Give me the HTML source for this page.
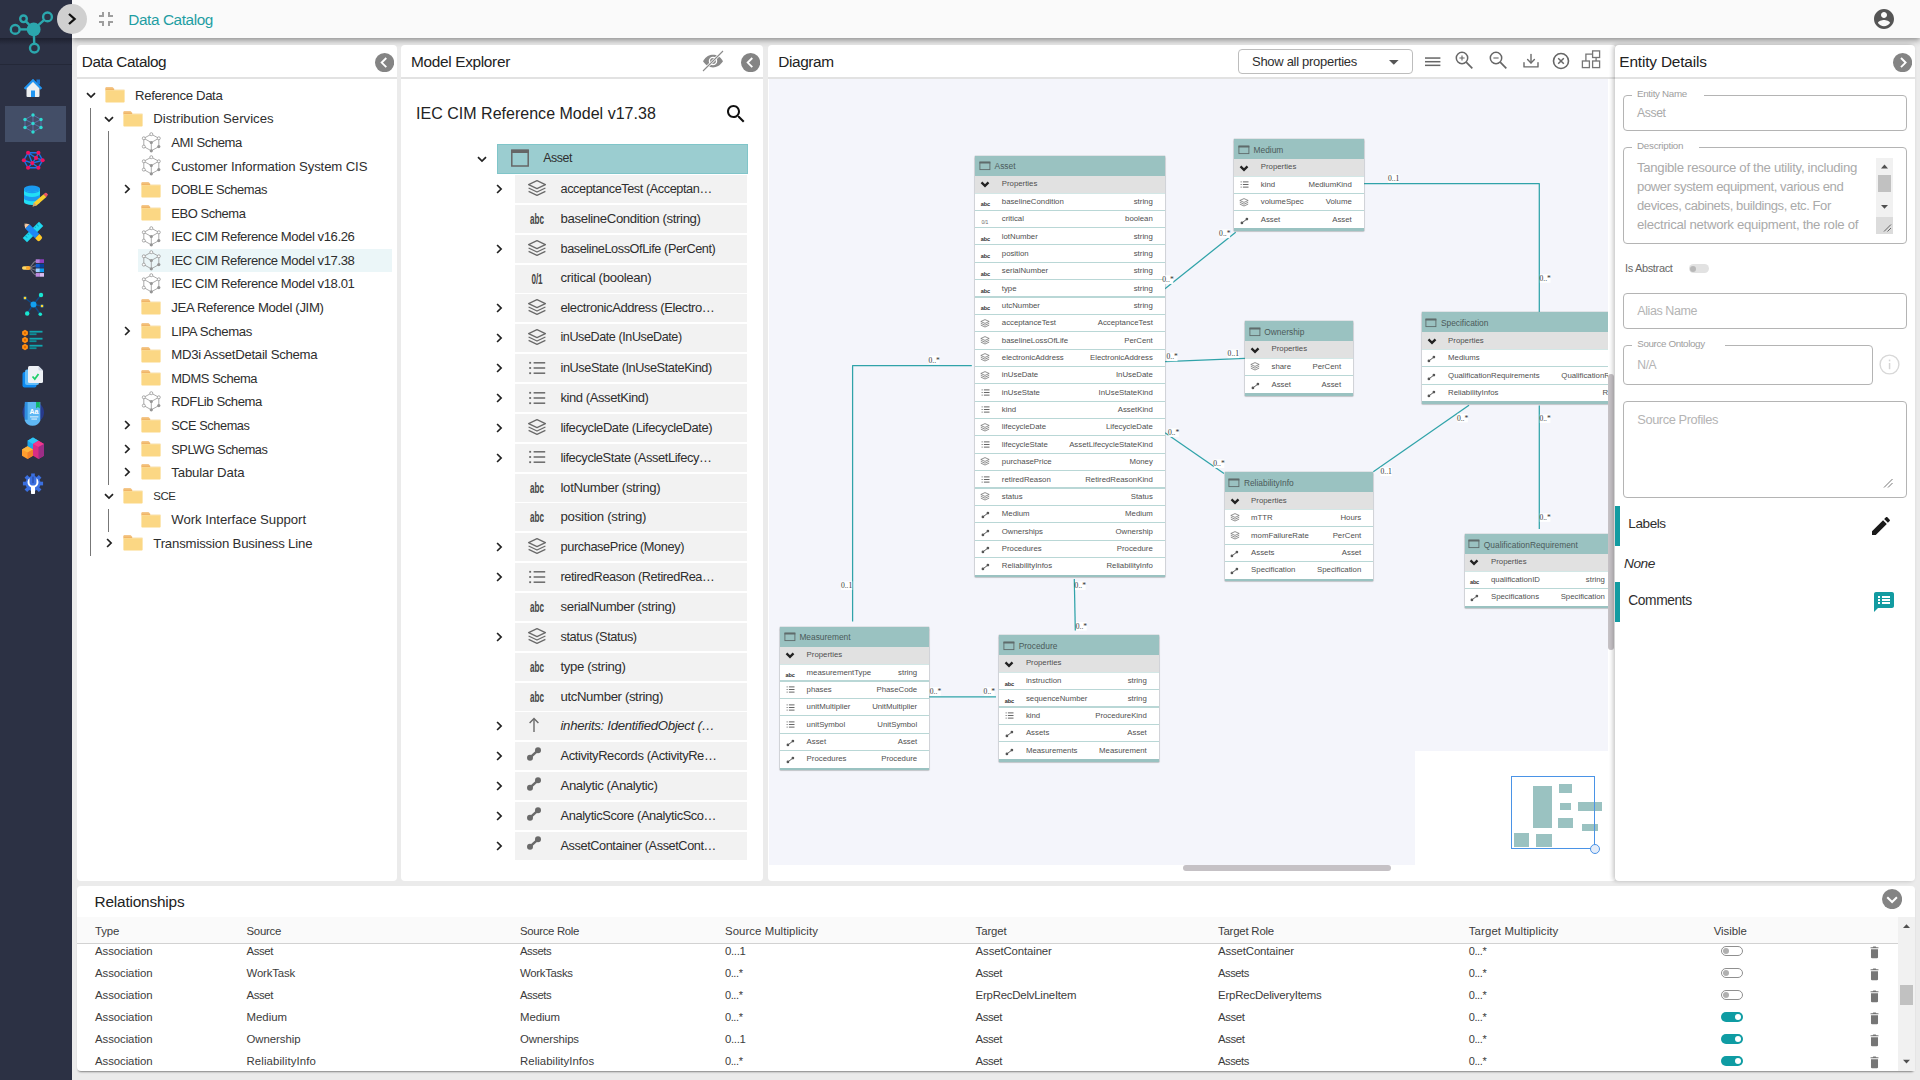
<!DOCTYPE html>
<html lang="en">
<head>
<meta charset="utf-8">
<title>Data Catalog</title>
<style>
*{box-sizing:border-box;margin:0;padding:0}
html,body{width:1920px;height:1080px;overflow:hidden}
body{background:#ebebeb;font-family:"Liberation Sans",sans-serif;font-size:13px;color:#333;position:relative}
.abs{position:absolute}
.t{position:absolute;white-space:nowrap;font-family:"Liberation Sans",sans-serif}
.t.d{font-size:7.8px;line-height:10px;color:#4f4f4f}
#side{position:absolute;left:0;top:0;width:72px;height:1080px;background:#2c3144}
#side .topsec{position:absolute;left:0;top:0;width:72px;height:65px;border-bottom:1px solid #242838}
#side .shadow{position:absolute;left:0;top:38px;width:72px;height:7px;background:linear-gradient(rgba(20,22,34,.6),rgba(44,49,68,0))}
#side .active{position:absolute;left:5px;top:106px;width:61px;height:36px;background:#434e67}
#topbar{position:absolute;left:72px;top:0;width:1848px;height:38px;background:#fafafa;box-shadow:0 2px 4px -1px rgba(0,0,0,.2),0 4px 5px 0 rgba(0,0,0,.14),0 1px 10px 0 rgba(0,0,0,.12)}
#toggle{position:absolute;left:57px;top:4px;width:30px;height:30px;border-radius:50%;background:#d0d0d0}
.panel{position:absolute;background:#fff;border-radius:4px}
.sep{position:absolute;left:0;right:0;top:32.2px;height:1.8px;background:#e2e2e2}
.ent{position:absolute;background:#9ac2c1;box-shadow:0 0 0 0.2px #8f9a9a,0 0.8px 1.5px rgba(0,0,0,.35)}
</style>
</head>
<body>
<div id="topbar">
</div>
<span class="t" style="left:128.30px;top:9.00px;font-size:15.37px;line-height:21px;letter-spacing:-0.420px;color:#1f9ea3;">Data Catalog</span>
<svg class="abs" style="left:94px;top:7px" width="24" height="24" viewBox="0 0 24 24"><path fill="#9e9e9e" d="M5 16h3v3h2v-5H5v2zm3-8H5v2h5V5H8v3zm6 11h2v-3h3v-2h-5v5zm2-11V5h-2v5h5V8h-3z"/></svg>
<svg class="abs" style="left:1872px;top:7px" width="24" height="24" viewBox="0 0 24 24"><path fill="#555" d="M12 2C6.48 2 2 6.48 2 12s4.48 10 10 10 10-4.48 10-10S17.52 2 12 2zm0 3c1.66 0 3 1.34 3 3s-1.34 3-3 3-3-1.34-3-3 1.34-3 3-3zm0 14.2c-2.5 0-4.71-1.28-6-3.22.03-1.99 4-3.08 6-3.08 1.99 0 5.97 1.09 6 3.08-1.29 1.94-3.5 3.22-6 3.22z"/></svg>
<div id="side"><div class="topsec"></div><div class="shadow"></div><div class="active"></div>
<svg class="abs" style="left:0;top:0" width="72" height="64" viewBox="0 0 72 64">
<g stroke="#2ba7ad" stroke-width="2.4" fill="none">
<line x1="33.7" y1="29.4" x2="47.5" y2="16.9"/><line x1="33.7" y1="29.4" x2="23.5" y2="18.8"/><line x1="33.7" y1="29.4" x2="15.2" y2="29.4"/><line x1="33.7" y1="29.4" x2="34.4" y2="48"/>
</g>
<circle cx="33.7" cy="29.4" r="6.9" fill="#2ba7ad"/>
<g stroke="#2ba7ad" stroke-width="2.4" fill="#2c3144">
<circle cx="47.5" cy="16.9" r="4.4"/><circle cx="23.5" cy="18.8" r="3.3"/><circle cx="15.2" cy="29.4" r="4.4"/><circle cx="34.4" cy="48.1" r="4.4"/>
</g></svg>
<svg class="abs" style="overflow:visible;left:21.0px;top:76.0px" width="24" height="24" viewBox="0 0 24 24"><path d="M3 12 L12 3 L21 12 L19.5 13.5 L12 6 L4.5 13.5 Z" fill="#2196f3"/><rect x="15.5" y="3.5" width="3.5" height="5" fill="#1976d2"/><path d="M5.5 12 L12 5.6 L18.5 12 V20 a1 1 0 0 1 -1 1 H6.5 a1 1 0 0 1 -1 -1 Z" fill="#eceff1"/><path d="M3 12 L12 3 L21 12 L19.6 13.4 L12 5.8 L4.4 13.4 Z" fill="#2196f3"/><rect x="10" y="14.5" width="4" height="6.5" fill="#2196f3"/></svg>
<svg class="abs" style="overflow:visible;left:21.0px;top:112.0px" width="24" height="24" viewBox="0 0 24 24"><g stroke="#6673b5" stroke-width="0.8" fill="none"><path d="M12 3 L20 7.5 V15.5 L12 20 L4 15.5 V7.5 Z M4 7.5 L12 11.5 L20 7.5 M12 11.5 V20 M4 15.5 L12 11.5 L20 15.5 M12 3 V11.5"/></g><circle cx="12" cy="3" r="1.7" fill="#2edbd2"/><circle cx="20" cy="7.5" r="1.7" fill="#2edbd2"/><circle cx="20" cy="15.5" r="1.7" fill="#2edbd2"/><circle cx="12" cy="20" r="1.7" fill="#2edbd2"/><circle cx="4" cy="15.5" r="1.7" fill="#2edbd2"/><circle cx="4" cy="7.5" r="1.7" fill="#2edbd2"/><circle cx="12" cy="11.5" r="1.7" fill="#2edbd2"/></svg>
<svg class="abs" style="overflow:visible;left:21.75px;top:148.75px" width="22.5" height="22.5" viewBox="0 0 24 24"><g stroke="#1a73e8" stroke-width="1.5" fill="none"><path d="M6.5 4 H17.5 L22 12 L17.5 20 H6.5 L2 12 Z M6.5 4 L11 15 L2 12 M11 15 L6.5 20 M11 15 L17.5 20 M11 15 L22 12 M11 15 L15 9.5 L17.5 4 M15 9.5 L6.5 4 M15 9.5 L22 12"/></g><circle cx="6.5" cy="4" r="2.2" fill="#f0125f"/><circle cx="17.5" cy="4" r="2.2" fill="#f0125f"/><circle cx="22" cy="12" r="2.2" fill="#f0125f"/><circle cx="17.5" cy="20" r="2.2" fill="#f0125f"/><circle cx="6.5" cy="20" r="2.2" fill="#f0125f"/><circle cx="2" cy="12" r="2.2" fill="#f0125f"/><circle cx="11" cy="15" r="2.2" fill="#f0125f"/><circle cx="15" cy="9.5" r="2.2" fill="#f0125f"/></svg>
<svg class="abs" style="overflow:visible;left:21.0px;top:184.0px" width="24" height="24" viewBox="0 0 24 24"><path d="M3 4.5 V18 a8 3 0 0 0 16 0 V4.5 Z" fill="#22dff5"/><path d="M3 10 a8 3 0 0 0 16 0 v4.2 a8 3 0 0 1 -16 0z" fill="#1a9af0"/><ellipse cx="11" cy="4.8" rx="8" ry="3.2" fill="#1a9af0"/><path d="M3 4.8 a8 3.2 0 0 0 16 0 v1.2 a8 3.2 0 0 1 -16 0z" fill="#1a9af0"/><path d="M11.6 22.6 L13 18.6 L22.6 10.2 L25.4 13 L15.6 21.6 Z" fill="#f9cf2f"/><path d="M22.6 10.2 L24 9 a1.2 1.2 0 0 1 1.6 0 L27 10.4 L25.4 13 Z" fill="#ef5466"/><path d="M11.6 22.6 L13 18.6 L15.6 21.6 Z" fill="#c9a27a"/></svg>
<svg class="abs" style="overflow:visible;left:21.0px;top:220.0px" width="24" height="24" viewBox="0 0 24 24"><g transform="rotate(-45 12 12)"><rect x="0.5" y="9" width="23" height="6" fill="#1fd8ef"/><g stroke="#0fa9c6" stroke-width="1"><line x1="4" y1="9" x2="4" y2="12"/><line x1="7" y1="9" x2="7" y2="11"/><line x1="17" y1="9" x2="17" y2="11"/><line x1="20" y1="9" x2="20" y2="12"/></g></g><g transform="rotate(45 12 12)"><rect x="4" y="9" width="14" height="6" fill="#1e88f5"/><path d="M4 9 L-0.5 12 L4 15 Z" fill="#f7c9a4"/><path d="M1 11 L-0.8 12 L1 13 Z" fill="#444"/><path d="M18 9 H21 a2 2 0 0 1 2 2 v2 a2 2 0 0 1 -2 2 H18 Z" fill="#ffc928"/></g></svg>
<svg class="abs" style="overflow:visible;left:22.0px;top:257.0px" width="22" height="22" viewBox="0 0 24 24"><g stroke="#7a7a86" stroke-width="1.1" fill="none"><path d="M7 12 C11 12 11 4.5 16 4.5"/><path d="M7 12 C11 12 12 9.5 16 9.5"/><path d="M7 12 C11 12 12 14.5 16 14.5"/><path d="M7 12 C11 12 11 19.5 16 19.5"/></g><rect x="0" y="10" width="9" height="4" rx="2" fill="#ffd864"/><rect x="4.5" y="10" width="4.5" height="4" rx="1.5" fill="#ffa62b"/><rect x="15" y="2.5" width="4.5" height="4" fill="#b57edc"/><rect x="19.5" y="2.5" width="4.5" height="4" fill="#8e3fc0"/><rect x="15" y="7.5" width="4.5" height="4" fill="#0b5ed7"/><rect x="19.5" y="7.5" width="4.5" height="4" fill="#053f9c"/><rect x="15" y="12.5" width="4.5" height="4" fill="#9fd0ff"/><rect x="19.5" y="12.5" width="4.5" height="4" fill="#0a9cf0"/><rect x="15" y="17.5" width="4.5" height="4" fill="#c08adf"/><rect x="19.5" y="17.5" width="4.5" height="4" fill="#dcbcf0"/></svg>
<svg class="abs" style="overflow:visible;left:21.0px;top:292.0px" width="24" height="24" viewBox="0 0 24 24"><g stroke="#104a85" stroke-width="1.4"><line x1="12.5" y1="12.5" x2="20" y2="3"/><line x1="12.5" y1="12.5" x2="4" y2="6"/><line x1="12.5" y1="12.5" x2="21" y2="14"/><line x1="12.5" y1="12.5" x2="6" y2="21.5"/><line x1="12.5" y1="12.5" x2="19.5" y2="22.5"/></g><circle cx="12.5" cy="12.5" r="3" fill="#12a0f0"/><circle cx="20" cy="3" r="2.2" fill="#19e6d0"/><circle cx="6.2" cy="21.5" r="2.2" fill="#19e6d0"/><circle cx="19.3" cy="22.3" r="1.8" fill="#19e6d0"/><circle cx="4" cy="6" r="2" fill="#104a85"/><rect x="2.8" y="4.8" width="2.4" height="2.4" fill="#ffd633"/><circle cx="21" cy="14" r="2" fill="#104a85"/><rect x="19.8" y="12.8" width="2.4" height="2.4" fill="#ffd633"/></svg>
<svg class="abs" style="overflow:visible;left:21.0px;top:328.0px" width="24" height="24" viewBox="0 0 24 24"><path d="M4 1.7999999999999998 L6.9 3.4 V6.6 L4 8.2 L1.1 6.6 V3.4 Z" fill="#ff8f14"/><circle cx="4" cy="5" r="1.2" fill="#e06d00"/><rect x="8.5" y="2.8" width="13" height="1.8" fill="#12a7b0"/><rect x="8.5" y="5.3" width="7" height="1.8" fill="#0d8f98"/><path d="M4 8.8 L6.9 10.4 V13.6 L4 15.2 L1.1 13.6 V10.4 Z" fill="#ff8f14"/><circle cx="4" cy="12" r="1.2" fill="#e06d00"/><rect x="8.5" y="9.8" width="13" height="1.8" fill="#12a7b0"/><rect x="8.5" y="12.3" width="7" height="1.8" fill="#0d8f98"/><path d="M4 15.8 L6.9 17.4 V20.6 L4 22.2 L1.1 20.6 V17.4 Z" fill="#ff8f14"/><circle cx="4" cy="19" r="1.2" fill="#e06d00"/><rect x="8.5" y="16.8" width="13" height="1.8" fill="#12a7b0"/><rect x="8.5" y="19.3" width="7" height="1.8" fill="#0d8f98"/></svg>
<svg class="abs" style="overflow:visible;left:21.0px;top:364.0px" width="24" height="24" viewBox="0 0 24 24"><rect x="1.5" y="8" width="14" height="15.5" rx="2" fill="#0d8bf2"/><rect x="4" y="5.5" width="14" height="15.5" rx="2" fill="#63bdf9"/><path d="M8.5 2 H17.5 L22 6.5 V17.5 a1.5 1.5 0 0 1 -1.5 1.5 H8.5 a1.5 1.5 0 0 1 -1.5 -1.5 V3.5 a1.5 1.5 0 0 1 1.5 -1.5 Z" fill="#eef1f6"/><path d="M17.5 2 L22 6.5 H18.5 a1 1 0 0 1 -1 -1 Z" fill="#cfd6e4"/><path d="M11.5 12.5 L13.8 15 L17.5 10" stroke="#1fcf6b" stroke-width="1.8" fill="none"/></svg>
<svg class="abs" style="overflow:visible;left:21.75px;top:400.75px" width="22.5" height="22.5" viewBox="0 0 24 24"><circle cx="12" cy="12" r="11.5" fill="#273a8c"/><path d="M3 3 a2 2 0 0 1 2 -2 H19.5 V21 a9 9 0 0 1 -16.5 0 Z" fill="#5fb8f4"/><rect x="3" y="1" width="3" height="19" fill="#2f8fe0"/><path d="M15 1 H19 V8 L17 6.5 L15 8 Z" fill="#12b76a"/><text x="8" y="14" font-family="Liberation Sans, sans-serif" font-size="7.5" fill="#fff" font-weight="bold">Aa</text><rect x="8.5" y="16.5" width="9" height="0.9" fill="#fff"/><rect x="10" y="18.8" width="6" height="0.9" fill="#fff"/></svg>
<svg class="abs" style="overflow:visible;left:22.0px;top:437.0px" width="22" height="22" viewBox="0 0 24 24"><path d="M12 0.5 L18 4 V11 L12 14.5 L6 11 V4 Z" fill="#1aa7ec"/><path d="M12 0.5 L18 4 L12 7.5 L6 4 Z" fill="#31c6f5"/><path d="M6 10 L12 13.5 V20.5 L6 24 L0 20.5 V13.5 Z" fill="#ff9d2e"/><path d="M6 10 L12 13.5 L6 17 L0 13.5 Z" fill="#ffb53d"/><path d="M6 17 L12 13.5 V20.5 L6 24 Z" fill="#f0802a"/><path d="M18 4 L24 7.5 V20.5 L18 24 L12 20.5 V7.5 Z" fill="#d92d84"/><path d="M18 4 L24 7.5 L18 11 L12 7.5 Z" fill="#f2388f"/><path d="M18 11 L24 7.5 V20.5 L18 24 Z" fill="#9c2d86"/></svg>
<svg class="abs" style="overflow:visible;left:22.0px;top:473.0px" width="22" height="22" viewBox="0 0 24 24"><rect x="10" y="0.5" width="4" height="5" fill="#3a6fe0" transform="rotate(0 12 11.5)"/><rect x="10" y="0.5" width="4" height="5" fill="#3a6fe0" transform="rotate(45 12 11.5)"/><rect x="10" y="0.5" width="4" height="5" fill="#3a6fe0" transform="rotate(90 12 11.5)"/><rect x="10" y="0.5" width="4" height="5" fill="#3a6fe0" transform="rotate(135 12 11.5)"/><rect x="10" y="0.5" width="4" height="5" fill="#3a6fe0" transform="rotate(180 12 11.5)"/><rect x="10" y="0.5" width="4" height="5" fill="#3a6fe0" transform="rotate(225 12 11.5)"/><rect x="10" y="0.5" width="4" height="5" fill="#3a6fe0" transform="rotate(270 12 11.5)"/><rect x="10" y="0.5" width="4" height="5" fill="#3a6fe0" transform="rotate(315 12 11.5)"/><circle cx="12" cy="11.5" r="8.2" fill="#3a6fe0"/><path d="M8.2 5.5 a6 6 0 1 0 7.6 0 V10 a3.8 3.8 0 0 1 -7.6 0 Z" fill="#fff"/><rect x="9.8" y="14" width="4.4" height="9" rx="0.8" fill="#fff"/><rect x="11" y="4" width="2" height="7" fill="#2d55b8"/></svg>
</div>
<div id="toggle"></div><svg class="abs" style="left:57px;top:4px" width="30" height="30" viewBox="0 0 30 30"><path d="M12 10 L17.6 15 L12 20" stroke="#111" stroke-width="2.3" fill="none"/></svg>
<div class="panel" style="left:77px;top:45px;width:320.2px;height:836px"><div class="sep"></div></div>
<div class="panel" style="left:401px;top:45px;width:362px;height:836px"><div class="sep"></div></div>
<div class="panel" style="left:768px;top:45px;width:848px;height:836px"><div class="sep"></div></div>
<div class="panel" style="left:77px;top:885.8px;width:1838px;height:185.4px;box-shadow:0 2px 2px -1px rgba(0,0,0,.45)"></div>
<span class="t" style="left:81.75px;top:52.00px;font-size:15.34px;line-height:20px;letter-spacing:-0.420px;color:#222;">Data Catalog</span>
<span class="t" style="left:411.00px;top:52.40px;font-size:15.4px;line-height:20px;letter-spacing:-0.326px;color:#222;">Model Explorer</span>
<span class="t" style="left:778.25px;top:52.00px;font-size:15.4px;line-height:20px;letter-spacing:-0.385px;color:#222;">Diagram</span>
<span class="t" style="left:94.50px;top:891.80px;font-size:15.4px;line-height:20px;letter-spacing:-0.189px;color:#222;">Relationships</span>
<svg class="abs" style="left:375.00px;top:52.80px" width="19.20" height="19.20" viewBox="0 0 19.2 19.2"><circle cx="9.6" cy="9.6" r="9.6" fill="#848484"/><path d="M11.3 5 L6.7 9.6 L11.3 14.2" stroke="#fff" stroke-width="1.9" fill="none"/></svg>
<svg class="abs" style="left:740.80px;top:52.80px" width="19.20" height="19.20" viewBox="0 0 19.2 19.2"><circle cx="9.6" cy="9.6" r="9.6" fill="#848484"/><path d="M11.3 5 L6.7 9.6 L11.3 14.2" stroke="#fff" stroke-width="1.9" fill="none"/></svg>
<svg class="abs" style="left:1882.02px;top:888.92px" width="20.16" height="20.16" viewBox="0 0 19.2 19.2"><circle cx="9.6" cy="9.6" r="9.6" fill="#848484"/><path d="M5 7.8 L9.6 12.4 L14.2 7.8" stroke="#fff" stroke-width="1.9" fill="none"/></svg>
<div class="abs" style="left:138px;top:248.86px;width:254px;height:23.5px;background:#ebf6f8"></div>
<div class="abs" style="left:90px;top:108px;width:1px;height:447.5px;background:#777"></div>
<div class="abs" style="left:108px;top:131px;width:1px;height:353.5px;background:#777"></div>
<div class="abs" style="left:108px;top:508.5px;width:1px;height:23px;background:#777"></div>
<svg class="abs" style="left:85px;top:89.00px" width="12" height="12" viewBox="0 0 12 12"><path d="M2 4.1 L6 8.1 L10 4.1" stroke="#222" stroke-width="1.7" fill="none"/></svg>
<svg class="abs" style="left:105px;top:87.20px" width="20" height="16" viewBox="0 0 20 16"><path d="M0.4 1 a0.8 0.8 0 0 1 .8 -.8 H7.4 a1 1 0 0 1 .9 .6 L9 2 H0.4 Z" fill="#f1b566"/><path d="M0.4 1.8 H9 L9.6 1.9 H19 a0.6 0.6 0 0 1 .6 .6 V4 H0.4 Z" fill="#fbefd6"/><rect x="0.4" y="1.7" width="8.8" height="1.6" fill="#f1b566"/><path d="M0.4 3.2 H19.6 V14.8 a0.8 0.8 0 0 1 -.8 .8 H1.2 a0.8 0.8 0 0 1 -.8 -.8 Z" fill="#fbd784"/></svg>
<span class="t" style="left:135.00px;top:86.80px;font-size:13.2px;line-height:17px;letter-spacing:-0.354px;color:#2e2e2e;">Reference Data</span>
<svg class="abs" style="left:103px;top:112.58px" width="12" height="12" viewBox="0 0 12 12"><path d="M2 4.1 L6 8.1 L10 4.1" stroke="#222" stroke-width="1.7" fill="none"/></svg>
<svg class="abs" style="left:123px;top:110.78px" width="20" height="16" viewBox="0 0 20 16"><path d="M0.4 1 a0.8 0.8 0 0 1 .8 -.8 H7.4 a1 1 0 0 1 .9 .6 L9 2 H0.4 Z" fill="#f1b566"/><path d="M0.4 1.8 H9 L9.6 1.9 H19 a0.6 0.6 0 0 1 .6 .6 V4 H0.4 Z" fill="#fbefd6"/><rect x="0.4" y="1.7" width="8.8" height="1.6" fill="#f1b566"/><path d="M0.4 3.2 H19.6 V14.8 a0.8 0.8 0 0 1 -.8 .8 H1.2 a0.8 0.8 0 0 1 -.8 -.8 Z" fill="#fbd784"/></svg>
<span class="t" style="left:153.25px;top:110.38px;font-size:13.2px;line-height:17px;letter-spacing:0.009px;color:#2e2e2e;">Distribution Services</span>
<svg class="abs" style="left:140.5px;top:131.66px" width="21" height="21" viewBox="0 0 21 21"><g stroke="#959595" stroke-width="0.8" fill="none"><path d="M10.3 2.2 L17.8 6.3 V14.6 L10.3 18.8 L2.8 14.6 V6.3 Z M2.8 6.3 L10.3 10.5 L17.8 6.3 M10.3 10.5 V18.8"/></g><g stroke="#959595" stroke-width="0.8" fill="#fff"><circle cx="10.3" cy="2.2" r="1.5"/><circle cx="2.8" cy="6.3" r="1.5"/><circle cx="17.8" cy="6.3" r="1.5"/><circle cx="2.8" cy="14.6" r="1.5"/></g><g fill="#959595"><circle cx="10.3" cy="10.5" r="1.6"/><circle cx="17.8" cy="14.6" r="1.6"/><circle cx="10.3" cy="18.8" r="1.6"/></g></svg>
<span class="t" style="left:171.25px;top:133.96px;font-size:13.09px;line-height:17px;letter-spacing:-0.420px;color:#2e2e2e;">AMI Schema</span>
<svg class="abs" style="left:140.5px;top:155.24px" width="21" height="21" viewBox="0 0 21 21"><g stroke="#959595" stroke-width="0.8" fill="none"><path d="M10.3 2.2 L17.8 6.3 V14.6 L10.3 18.8 L2.8 14.6 V6.3 Z M2.8 6.3 L10.3 10.5 L17.8 6.3 M10.3 10.5 V18.8"/></g><g stroke="#959595" stroke-width="0.8" fill="#fff"><circle cx="10.3" cy="2.2" r="1.5"/><circle cx="2.8" cy="6.3" r="1.5"/><circle cx="17.8" cy="6.3" r="1.5"/><circle cx="2.8" cy="14.6" r="1.5"/></g><g fill="#959595"><circle cx="10.3" cy="10.5" r="1.6"/><circle cx="17.8" cy="14.6" r="1.6"/><circle cx="10.3" cy="18.8" r="1.6"/></g></svg>
<span class="t" style="left:171.25px;top:157.54px;font-size:13.2px;line-height:17px;letter-spacing:-0.129px;color:#2e2e2e;">Customer Information System CIS</span>
<svg class="abs" style="left:121px;top:183.32px" width="12" height="12" viewBox="0 0 12 12"><path d="M4.1 2 L8.1 6 L4.1 10" stroke="#222" stroke-width="1.7" fill="none"/></svg>
<svg class="abs" style="left:141px;top:181.52px" width="20" height="16" viewBox="0 0 20 16"><path d="M0.4 1 a0.8 0.8 0 0 1 .8 -.8 H7.4 a1 1 0 0 1 .9 .6 L9 2 H0.4 Z" fill="#f1b566"/><path d="M0.4 1.8 H9 L9.6 1.9 H19 a0.6 0.6 0 0 1 .6 .6 V4 H0.4 Z" fill="#fbefd6"/><rect x="0.4" y="1.7" width="8.8" height="1.6" fill="#f1b566"/><path d="M0.4 3.2 H19.6 V14.8 a0.8 0.8 0 0 1 -.8 .8 H1.2 a0.8 0.8 0 0 1 -.8 -.8 Z" fill="#fbd784"/></svg>
<span class="t" style="left:171.25px;top:181.12px;font-size:12.92px;line-height:17px;letter-spacing:-0.420px;color:#2e2e2e;">DOBLE Schemas</span>
<svg class="abs" style="left:141px;top:205.10px" width="20" height="16" viewBox="0 0 20 16"><path d="M0.4 1 a0.8 0.8 0 0 1 .8 -.8 H7.4 a1 1 0 0 1 .9 .6 L9 2 H0.4 Z" fill="#f1b566"/><path d="M0.4 1.8 H9 L9.6 1.9 H19 a0.6 0.6 0 0 1 .6 .6 V4 H0.4 Z" fill="#fbefd6"/><rect x="0.4" y="1.7" width="8.8" height="1.6" fill="#f1b566"/><path d="M0.4 3.2 H19.6 V14.8 a0.8 0.8 0 0 1 -.8 .8 H1.2 a0.8 0.8 0 0 1 -.8 -.8 Z" fill="#fbd784"/></svg>
<span class="t" style="left:171.25px;top:204.70px;font-size:12.95px;line-height:17px;letter-spacing:-0.420px;color:#2e2e2e;">EBO Schema</span>
<svg class="abs" style="left:140.5px;top:225.98px" width="21" height="21" viewBox="0 0 21 21"><g stroke="#959595" stroke-width="0.8" fill="none"><path d="M10.3 2.2 L17.8 6.3 V14.6 L10.3 18.8 L2.8 14.6 V6.3 Z M2.8 6.3 L10.3 10.5 L17.8 6.3 M10.3 10.5 V18.8"/></g><g stroke="#959595" stroke-width="0.8" fill="#fff"><circle cx="10.3" cy="2.2" r="1.5"/><circle cx="2.8" cy="6.3" r="1.5"/><circle cx="17.8" cy="6.3" r="1.5"/><circle cx="2.8" cy="14.6" r="1.5"/></g><g fill="#959595"><circle cx="10.3" cy="10.5" r="1.6"/><circle cx="17.8" cy="14.6" r="1.6"/><circle cx="10.3" cy="18.8" r="1.6"/></g></svg>
<span class="t" style="left:171.25px;top:228.28px;font-size:13.10px;line-height:17px;letter-spacing:-0.420px;color:#2e2e2e;">IEC CIM Reference Model v16.26</span>
<svg class="abs" style="left:140.5px;top:249.56px" width="21" height="21" viewBox="0 0 21 21"><g stroke="#959595" stroke-width="0.8" fill="none"><path d="M10.3 2.2 L17.8 6.3 V14.6 L10.3 18.8 L2.8 14.6 V6.3 Z M2.8 6.3 L10.3 10.5 L17.8 6.3 M10.3 10.5 V18.8"/></g><g stroke="#959595" stroke-width="0.8" fill="#fff"><circle cx="10.3" cy="2.2" r="1.5"/><circle cx="2.8" cy="6.3" r="1.5"/><circle cx="17.8" cy="6.3" r="1.5"/><circle cx="2.8" cy="14.6" r="1.5"/></g><g fill="#959595"><circle cx="10.3" cy="10.5" r="1.6"/><circle cx="17.8" cy="14.6" r="1.6"/><circle cx="10.3" cy="18.8" r="1.6"/></g></svg>
<span class="t" style="left:171.25px;top:251.86px;font-size:13.10px;line-height:17px;letter-spacing:-0.420px;color:#2e2e2e;">IEC CIM Reference Model v17.38</span>
<svg class="abs" style="left:140.5px;top:273.14px" width="21" height="21" viewBox="0 0 21 21"><g stroke="#959595" stroke-width="0.8" fill="none"><path d="M10.3 2.2 L17.8 6.3 V14.6 L10.3 18.8 L2.8 14.6 V6.3 Z M2.8 6.3 L10.3 10.5 L17.8 6.3 M10.3 10.5 V18.8"/></g><g stroke="#959595" stroke-width="0.8" fill="#fff"><circle cx="10.3" cy="2.2" r="1.5"/><circle cx="2.8" cy="6.3" r="1.5"/><circle cx="17.8" cy="6.3" r="1.5"/><circle cx="2.8" cy="14.6" r="1.5"/></g><g fill="#959595"><circle cx="10.3" cy="10.5" r="1.6"/><circle cx="17.8" cy="14.6" r="1.6"/><circle cx="10.3" cy="18.8" r="1.6"/></g></svg>
<span class="t" style="left:171.25px;top:275.44px;font-size:13.10px;line-height:17px;letter-spacing:-0.420px;color:#2e2e2e;">IEC CIM Reference Model v18.01</span>
<svg class="abs" style="left:141px;top:299.42px" width="20" height="16" viewBox="0 0 20 16"><path d="M0.4 1 a0.8 0.8 0 0 1 .8 -.8 H7.4 a1 1 0 0 1 .9 .6 L9 2 H0.4 Z" fill="#f1b566"/><path d="M0.4 1.8 H9 L9.6 1.9 H19 a0.6 0.6 0 0 1 .6 .6 V4 H0.4 Z" fill="#fbefd6"/><rect x="0.4" y="1.7" width="8.8" height="1.6" fill="#f1b566"/><path d="M0.4 3.2 H19.6 V14.8 a0.8 0.8 0 0 1 -.8 .8 H1.2 a0.8 0.8 0 0 1 -.8 -.8 Z" fill="#fbd784"/></svg>
<span class="t" style="left:171.25px;top:299.02px;font-size:13.2px;line-height:17px;letter-spacing:-0.356px;color:#2e2e2e;">JEA Reference Model (JIM)</span>
<svg class="abs" style="left:121px;top:324.80px" width="12" height="12" viewBox="0 0 12 12"><path d="M4.1 2 L8.1 6 L4.1 10" stroke="#222" stroke-width="1.7" fill="none"/></svg>
<svg class="abs" style="left:141px;top:323.00px" width="20" height="16" viewBox="0 0 20 16"><path d="M0.4 1 a0.8 0.8 0 0 1 .8 -.8 H7.4 a1 1 0 0 1 .9 .6 L9 2 H0.4 Z" fill="#f1b566"/><path d="M0.4 1.8 H9 L9.6 1.9 H19 a0.6 0.6 0 0 1 .6 .6 V4 H0.4 Z" fill="#fbefd6"/><rect x="0.4" y="1.7" width="8.8" height="1.6" fill="#f1b566"/><path d="M0.4 3.2 H19.6 V14.8 a0.8 0.8 0 0 1 -.8 .8 H1.2 a0.8 0.8 0 0 1 -.8 -.8 Z" fill="#fbd784"/></svg>
<span class="t" style="left:171.25px;top:322.60px;font-size:13.2px;line-height:17px;letter-spacing:-0.404px;color:#2e2e2e;">LIPA Schemas</span>
<svg class="abs" style="left:141px;top:346.58px" width="20" height="16" viewBox="0 0 20 16"><path d="M0.4 1 a0.8 0.8 0 0 1 .8 -.8 H7.4 a1 1 0 0 1 .9 .6 L9 2 H0.4 Z" fill="#f1b566"/><path d="M0.4 1.8 H9 L9.6 1.9 H19 a0.6 0.6 0 0 1 .6 .6 V4 H0.4 Z" fill="#fbefd6"/><rect x="0.4" y="1.7" width="8.8" height="1.6" fill="#f1b566"/><path d="M0.4 3.2 H19.6 V14.8 a0.8 0.8 0 0 1 -.8 .8 H1.2 a0.8 0.8 0 0 1 -.8 -.8 Z" fill="#fbd784"/></svg>
<span class="t" style="left:171.25px;top:346.18px;font-size:13.2px;line-height:17px;letter-spacing:-0.276px;color:#2e2e2e;">MD3i AssetDetail Schema</span>
<svg class="abs" style="left:141px;top:370.16px" width="20" height="16" viewBox="0 0 20 16"><path d="M0.4 1 a0.8 0.8 0 0 1 .8 -.8 H7.4 a1 1 0 0 1 .9 .6 L9 2 H0.4 Z" fill="#f1b566"/><path d="M0.4 1.8 H9 L9.6 1.9 H19 a0.6 0.6 0 0 1 .6 .6 V4 H0.4 Z" fill="#fbefd6"/><rect x="0.4" y="1.7" width="8.8" height="1.6" fill="#f1b566"/><path d="M0.4 3.2 H19.6 V14.8 a0.8 0.8 0 0 1 -.8 .8 H1.2 a0.8 0.8 0 0 1 -.8 -.8 Z" fill="#fbd784"/></svg>
<span class="t" style="left:171.25px;top:369.76px;font-size:12.91px;line-height:17px;letter-spacing:-0.420px;color:#2e2e2e;">MDMS Schema</span>
<svg class="abs" style="left:140.5px;top:391.04px" width="21" height="21" viewBox="0 0 21 21"><g stroke="#959595" stroke-width="0.8" fill="none"><path d="M10.3 2.2 L17.8 6.3 V14.6 L10.3 18.8 L2.8 14.6 V6.3 Z M2.8 6.3 L10.3 10.5 L17.8 6.3 M10.3 10.5 V18.8"/></g><g stroke="#959595" stroke-width="0.8" fill="#fff"><circle cx="10.3" cy="2.2" r="1.5"/><circle cx="2.8" cy="6.3" r="1.5"/><circle cx="17.8" cy="6.3" r="1.5"/><circle cx="2.8" cy="14.6" r="1.5"/></g><g fill="#959595"><circle cx="10.3" cy="10.5" r="1.6"/><circle cx="17.8" cy="14.6" r="1.6"/><circle cx="10.3" cy="18.8" r="1.6"/></g></svg>
<span class="t" style="left:171.25px;top:393.34px;font-size:13.11px;line-height:17px;letter-spacing:-0.420px;color:#2e2e2e;">RDFLib Schema</span>
<svg class="abs" style="left:121px;top:419.12px" width="12" height="12" viewBox="0 0 12 12"><path d="M4.1 2 L8.1 6 L4.1 10" stroke="#222" stroke-width="1.7" fill="none"/></svg>
<svg class="abs" style="left:141px;top:417.32px" width="20" height="16" viewBox="0 0 20 16"><path d="M0.4 1 a0.8 0.8 0 0 1 .8 -.8 H7.4 a1 1 0 0 1 .9 .6 L9 2 H0.4 Z" fill="#f1b566"/><path d="M0.4 1.8 H9 L9.6 1.9 H19 a0.6 0.6 0 0 1 .6 .6 V4 H0.4 Z" fill="#fbefd6"/><rect x="0.4" y="1.7" width="8.8" height="1.6" fill="#f1b566"/><path d="M0.4 3.2 H19.6 V14.8 a0.8 0.8 0 0 1 -.8 .8 H1.2 a0.8 0.8 0 0 1 -.8 -.8 Z" fill="#fbd784"/></svg>
<span class="t" style="left:171.25px;top:416.92px;font-size:12.74px;line-height:17px;letter-spacing:-0.420px;color:#2e2e2e;">SCE Schemas</span>
<svg class="abs" style="left:121px;top:442.70px" width="12" height="12" viewBox="0 0 12 12"><path d="M4.1 2 L8.1 6 L4.1 10" stroke="#222" stroke-width="1.7" fill="none"/></svg>
<svg class="abs" style="left:141px;top:440.90px" width="20" height="16" viewBox="0 0 20 16"><path d="M0.4 1 a0.8 0.8 0 0 1 .8 -.8 H7.4 a1 1 0 0 1 .9 .6 L9 2 H0.4 Z" fill="#f1b566"/><path d="M0.4 1.8 H9 L9.6 1.9 H19 a0.6 0.6 0 0 1 .6 .6 V4 H0.4 Z" fill="#fbefd6"/><rect x="0.4" y="1.7" width="8.8" height="1.6" fill="#f1b566"/><path d="M0.4 3.2 H19.6 V14.8 a0.8 0.8 0 0 1 -.8 .8 H1.2 a0.8 0.8 0 0 1 -.8 -.8 Z" fill="#fbd784"/></svg>
<span class="t" style="left:171.25px;top:440.50px;font-size:12.74px;line-height:17px;letter-spacing:-0.420px;color:#2e2e2e;">SPLWG Schemas</span>
<svg class="abs" style="left:121px;top:466.28px" width="12" height="12" viewBox="0 0 12 12"><path d="M4.1 2 L8.1 6 L4.1 10" stroke="#222" stroke-width="1.7" fill="none"/></svg>
<svg class="abs" style="left:141px;top:464.48px" width="20" height="16" viewBox="0 0 20 16"><path d="M0.4 1 a0.8 0.8 0 0 1 .8 -.8 H7.4 a1 1 0 0 1 .9 .6 L9 2 H0.4 Z" fill="#f1b566"/><path d="M0.4 1.8 H9 L9.6 1.9 H19 a0.6 0.6 0 0 1 .6 .6 V4 H0.4 Z" fill="#fbefd6"/><rect x="0.4" y="1.7" width="8.8" height="1.6" fill="#f1b566"/><path d="M0.4 3.2 H19.6 V14.8 a0.8 0.8 0 0 1 -.8 .8 H1.2 a0.8 0.8 0 0 1 -.8 -.8 Z" fill="#fbd784"/></svg>
<span class="t" style="left:171.25px;top:464.08px;font-size:13.2px;line-height:17px;letter-spacing:-0.133px;color:#2e2e2e;">Tabular Data</span>
<svg class="abs" style="left:103px;top:489.86px" width="12" height="12" viewBox="0 0 12 12"><path d="M2 4.1 L6 8.1 L10 4.1" stroke="#222" stroke-width="1.7" fill="none"/></svg>
<svg class="abs" style="left:123px;top:488.06px" width="20" height="16" viewBox="0 0 20 16"><path d="M0.4 1 a0.8 0.8 0 0 1 .8 -.8 H7.4 a1 1 0 0 1 .9 .6 L9 2 H0.4 Z" fill="#f1b566"/><path d="M0.4 1.8 H9 L9.6 1.9 H19 a0.6 0.6 0 0 1 .6 .6 V4 H0.4 Z" fill="#fbefd6"/><rect x="0.4" y="1.7" width="8.8" height="1.6" fill="#f1b566"/><path d="M0.4 3.2 H19.6 V14.8 a0.8 0.8 0 0 1 -.8 .8 H1.2 a0.8 0.8 0 0 1 -.8 -.8 Z" fill="#fbd784"/></svg>
<span class="t" style="left:153.25px;top:487.66px;font-size:11.43px;line-height:17px;letter-spacing:-0.420px;color:#2e2e2e;">SCE</span>
<svg class="abs" style="left:141px;top:511.64px" width="20" height="16" viewBox="0 0 20 16"><path d="M0.4 1 a0.8 0.8 0 0 1 .8 -.8 H7.4 a1 1 0 0 1 .9 .6 L9 2 H0.4 Z" fill="#f1b566"/><path d="M0.4 1.8 H9 L9.6 1.9 H19 a0.6 0.6 0 0 1 .6 .6 V4 H0.4 Z" fill="#fbefd6"/><rect x="0.4" y="1.7" width="8.8" height="1.6" fill="#f1b566"/><path d="M0.4 3.2 H19.6 V14.8 a0.8 0.8 0 0 1 -.8 .8 H1.2 a0.8 0.8 0 0 1 -.8 -.8 Z" fill="#fbd784"/></svg>
<span class="t" style="left:171.25px;top:511.24px;font-size:13.2px;line-height:17px;letter-spacing:-0.022px;color:#2e2e2e;">Work Interface Support</span>
<svg class="abs" style="left:103px;top:537.02px" width="12" height="12" viewBox="0 0 12 12"><path d="M4.1 2 L8.1 6 L4.1 10" stroke="#222" stroke-width="1.7" fill="none"/></svg>
<svg class="abs" style="left:123px;top:535.22px" width="20" height="16" viewBox="0 0 20 16"><path d="M0.4 1 a0.8 0.8 0 0 1 .8 -.8 H7.4 a1 1 0 0 1 .9 .6 L9 2 H0.4 Z" fill="#f1b566"/><path d="M0.4 1.8 H9 L9.6 1.9 H19 a0.6 0.6 0 0 1 .6 .6 V4 H0.4 Z" fill="#fbefd6"/><rect x="0.4" y="1.7" width="8.8" height="1.6" fill="#f1b566"/><path d="M0.4 3.2 H19.6 V14.8 a0.8 0.8 0 0 1 -.8 .8 H1.2 a0.8 0.8 0 0 1 -.8 -.8 Z" fill="#fbd784"/></svg>
<span class="t" style="left:153.25px;top:534.82px;font-size:13.2px;line-height:17px;letter-spacing:-0.177px;color:#2e2e2e;">Transmission Business Line</span>
<span class="t" style="left:416px;top:102.5px;font-size:16px;line-height:21px;color:#222;letter-spacing:0.02px">IEC CIM Reference Model v17.38</span>
<svg class="abs" style="left:724px;top:102.3px" width="24" height="24" viewBox="0 0 24 24"><path fill="#111" d="M15.5 14h-.79l-.28-.27C15.41 12.59 16 11.11 16 9.5 16 5.91 13.09 3 9.5 3S3 5.91 3 9.5 5.91 16 9.5 16c1.61 0 3.09-.59 4.23-1.57l.27.28v.79l5 4.99L20.49 19l-4.99-5zm-6 0C7.01 14 5 11.99 5 9.5S7.01 5 9.5 5 14 7.01 14 9.5 11.99 14 9.5 14z"/></svg>
<svg class="abs" style="left:701px;top:49px" width="24" height="24" viewBox="0 0 24 24"><path d="M2 12.3 C5 7.2 8.5 5.8 12 5.8 S19 7.2 22 12.3 C19 16.8 15.5 18.4 12 18.4 S5 16.8 2 12.3 Z" fill="#8a8a8a"/><circle cx="12" cy="12" r="3.6" fill="none" stroke="#fff" stroke-width="1.3"/><line x1="2" y1="22" x2="22" y2="2" stroke="#fff" stroke-width="2.6"/><line x1="2" y1="22" x2="22" y2="2" stroke="#8a8a8a" stroke-width="1.1"/></svg>
<div class="abs" style="left:497px;top:144px;width:251px;height:29.8px;background:#9bcdd0;border:1px solid #80c5c9"></div>
<svg class="abs" style="left:476px;top:153.00px" width="12" height="12" viewBox="0 0 12 12"><path d="M2 4.1 L6 8.1 L10 4.1" stroke="#222" stroke-width="1.7" fill="none"/></svg>
<svg class="abs" style="left:510px;top:148px" width="20" height="20" viewBox="0 0 20 20"><rect x="1.8" y="2.6" width="16.4" height="15.4" fill="none" stroke="#666" stroke-width="1.5"/><rect x="1.1" y="1.4" width="17.8" height="3.6" fill="#666"/></svg>
<span class="t" style="left:543.25px;top:150.10px;font-size:12.34px;line-height:17px;letter-spacing:-0.420px;color:#2e2e2e;">Asset</span>
<div class="abs" style="left:515px;top:175.00px;width:232px;height:28px;background:#f2f2f2"></div>
<svg class="abs" style="left:493px;top:183.00px" width="12" height="12" viewBox="0 0 12 12"><path d="M4.1 2 L8.1 6 L4.1 10" stroke="#222" stroke-width="1.7" fill="none"/></svg>
<svg class="abs" style="left:527px;top:178.90px" width="20" height="18" viewBox="0 0 20 18"><g stroke="#6a6a6a" stroke-width="1.3" fill="none" stroke-linejoin="round"><path d="M10 1.6 L18.4 5.6 L10 9.6 L1.6 5.6 Z"/><path d="M1.6 9 L10 13 L18.4 9"/><path d="M1.6 12.4 L10 16.4 L18.4 12.4"/></g></svg>
<span class="t" style="left:560.50px;top:179.90px;font-size:12.71px;line-height:17px;letter-spacing:-0.420px;color:#2e2e2e;">acceptanceTest (Acceptan…</span>
<div class="abs" style="left:515px;top:204.86px;width:232px;height:28px;background:#f2f2f2"></div>
<span class="t" style="left:522px;top:209.86px;width:30px;text-align:center;font-size:14.5px;line-height:18px;color:#444;font-weight:bold;transform:scaleX(0.56);letter-spacing:-0.1px">abc</span>
<span class="t" style="left:560.50px;top:209.76px;font-size:13.2px;line-height:17px;letter-spacing:-0.363px;color:#2e2e2e;">baselineCondition (string)</span>
<div class="abs" style="left:515px;top:234.72px;width:232px;height:28px;background:#f2f2f2"></div>
<svg class="abs" style="left:493px;top:242.72px" width="12" height="12" viewBox="0 0 12 12"><path d="M4.1 2 L8.1 6 L4.1 10" stroke="#222" stroke-width="1.7" fill="none"/></svg>
<svg class="abs" style="left:527px;top:238.62px" width="20" height="18" viewBox="0 0 20 18"><g stroke="#6a6a6a" stroke-width="1.3" fill="none" stroke-linejoin="round"><path d="M10 1.6 L18.4 5.6 L10 9.6 L1.6 5.6 Z"/><path d="M1.6 9 L10 13 L18.4 9"/><path d="M1.6 12.4 L10 16.4 L18.4 12.4"/></g></svg>
<span class="t" style="left:560.50px;top:239.62px;font-size:12.71px;line-height:17px;letter-spacing:-0.420px;color:#2e2e2e;">baselineLossOfLife (PerCent)</span>
<div class="abs" style="left:515px;top:264.58px;width:232px;height:28px;background:#f2f2f2"></div>
<span class="t" style="left:522px;top:269.58px;width:30px;text-align:center;font-size:14.5px;line-height:18px;color:#444;font-weight:bold;transform:scaleX(0.56);letter-spacing:-0.1px">0/1</span>
<span class="t" style="left:560.50px;top:269.48px;font-size:13.2px;line-height:17px;letter-spacing:-0.325px;color:#2e2e2e;">critical (boolean)</span>
<div class="abs" style="left:515px;top:294.44px;width:232px;height:28px;background:#f2f2f2"></div>
<svg class="abs" style="left:493px;top:302.44px" width="12" height="12" viewBox="0 0 12 12"><path d="M4.1 2 L8.1 6 L4.1 10" stroke="#222" stroke-width="1.7" fill="none"/></svg>
<svg class="abs" style="left:527px;top:298.34px" width="20" height="18" viewBox="0 0 20 18"><g stroke="#6a6a6a" stroke-width="1.3" fill="none" stroke-linejoin="round"><path d="M10 1.6 L18.4 5.6 L10 9.6 L1.6 5.6 Z"/><path d="M1.6 9 L10 13 L18.4 9"/><path d="M1.6 12.4 L10 16.4 L18.4 12.4"/></g></svg>
<span class="t" style="left:560.50px;top:299.34px;font-size:13.05px;line-height:17px;letter-spacing:-0.420px;color:#2e2e2e;">electronicAddress (Electro…</span>
<div class="abs" style="left:515px;top:324.30px;width:232px;height:28px;background:#f2f2f2"></div>
<svg class="abs" style="left:493px;top:332.30px" width="12" height="12" viewBox="0 0 12 12"><path d="M4.1 2 L8.1 6 L4.1 10" stroke="#222" stroke-width="1.7" fill="none"/></svg>
<svg class="abs" style="left:527px;top:328.20px" width="20" height="18" viewBox="0 0 20 18"><g stroke="#6a6a6a" stroke-width="1.3" fill="none" stroke-linejoin="round"><path d="M10 1.6 L18.4 5.6 L10 9.6 L1.6 5.6 Z"/><path d="M1.6 9 L10 13 L18.4 9"/><path d="M1.6 12.4 L10 16.4 L18.4 12.4"/></g></svg>
<span class="t" style="left:560.50px;top:329.20px;font-size:12.58px;line-height:17px;letter-spacing:-0.420px;color:#2e2e2e;">inUseDate (InUseDate)</span>
<div class="abs" style="left:515px;top:354.16px;width:232px;height:28px;background:#f2f2f2"></div>
<svg class="abs" style="left:493px;top:362.16px" width="12" height="12" viewBox="0 0 12 12"><path d="M4.1 2 L8.1 6 L4.1 10" stroke="#222" stroke-width="1.7" fill="none"/></svg>
<svg class="abs" style="left:528px;top:358.86px" width="18" height="18" viewBox="0 0 18 18"><rect x="1.2" y="2.9" width="1.9" height="1.8" fill="#6a6a6a"/><rect x="5.6" y="3.05" width="11.6" height="1.5" fill="#6a6a6a"/><rect x="1.2" y="8.1" width="1.9" height="1.8" fill="#6a6a6a"/><rect x="5.6" y="8.25" width="11.6" height="1.5" fill="#6a6a6a"/><rect x="1.2" y="13.299999999999999" width="1.9" height="1.8" fill="#6a6a6a"/><rect x="5.6" y="13.45" width="11.6" height="1.5" fill="#6a6a6a"/></svg>
<span class="t" style="left:560.50px;top:359.06px;font-size:12.72px;line-height:17px;letter-spacing:-0.420px;color:#2e2e2e;">inUseState (InUseStateKind)</span>
<div class="abs" style="left:515px;top:384.02px;width:232px;height:28px;background:#f2f2f2"></div>
<svg class="abs" style="left:493px;top:392.02px" width="12" height="12" viewBox="0 0 12 12"><path d="M4.1 2 L8.1 6 L4.1 10" stroke="#222" stroke-width="1.7" fill="none"/></svg>
<svg class="abs" style="left:528px;top:388.72px" width="18" height="18" viewBox="0 0 18 18"><rect x="1.2" y="2.9" width="1.9" height="1.8" fill="#6a6a6a"/><rect x="5.6" y="3.05" width="11.6" height="1.5" fill="#6a6a6a"/><rect x="1.2" y="8.1" width="1.9" height="1.8" fill="#6a6a6a"/><rect x="5.6" y="8.25" width="11.6" height="1.5" fill="#6a6a6a"/><rect x="1.2" y="13.299999999999999" width="1.9" height="1.8" fill="#6a6a6a"/><rect x="5.6" y="13.45" width="11.6" height="1.5" fill="#6a6a6a"/></svg>
<span class="t" style="left:560.50px;top:388.92px;font-size:13.01px;line-height:17px;letter-spacing:-0.420px;color:#2e2e2e;">kind (AssetKind)</span>
<div class="abs" style="left:515px;top:413.88px;width:232px;height:28px;background:#f2f2f2"></div>
<svg class="abs" style="left:493px;top:421.88px" width="12" height="12" viewBox="0 0 12 12"><path d="M4.1 2 L8.1 6 L4.1 10" stroke="#222" stroke-width="1.7" fill="none"/></svg>
<svg class="abs" style="left:527px;top:417.78px" width="20" height="18" viewBox="0 0 20 18"><g stroke="#6a6a6a" stroke-width="1.3" fill="none" stroke-linejoin="round"><path d="M10 1.6 L18.4 5.6 L10 9.6 L1.6 5.6 Z"/><path d="M1.6 9 L10 13 L18.4 9"/><path d="M1.6 12.4 L10 16.4 L18.4 12.4"/></g></svg>
<span class="t" style="left:560.50px;top:418.78px;font-size:12.99px;line-height:17px;letter-spacing:-0.420px;color:#2e2e2e;">lifecycleDate (LifecycleDate)</span>
<div class="abs" style="left:515px;top:443.74px;width:232px;height:28px;background:#f2f2f2"></div>
<svg class="abs" style="left:493px;top:451.74px" width="12" height="12" viewBox="0 0 12 12"><path d="M4.1 2 L8.1 6 L4.1 10" stroke="#222" stroke-width="1.7" fill="none"/></svg>
<svg class="abs" style="left:528px;top:448.44px" width="18" height="18" viewBox="0 0 18 18"><rect x="1.2" y="2.9" width="1.9" height="1.8" fill="#6a6a6a"/><rect x="5.6" y="3.05" width="11.6" height="1.5" fill="#6a6a6a"/><rect x="1.2" y="8.1" width="1.9" height="1.8" fill="#6a6a6a"/><rect x="5.6" y="8.25" width="11.6" height="1.5" fill="#6a6a6a"/><rect x="1.2" y="13.299999999999999" width="1.9" height="1.8" fill="#6a6a6a"/><rect x="5.6" y="13.45" width="11.6" height="1.5" fill="#6a6a6a"/></svg>
<span class="t" style="left:560.50px;top:448.64px;font-size:12.92px;line-height:17px;letter-spacing:-0.420px;color:#2e2e2e;">lifecycleState (AssetLifecy…</span>
<div class="abs" style="left:515px;top:473.60px;width:232px;height:28px;background:#f2f2f2"></div>
<span class="t" style="left:522px;top:478.60px;width:30px;text-align:center;font-size:14.5px;line-height:18px;color:#444;font-weight:bold;transform:scaleX(0.56);letter-spacing:-0.1px">abc</span>
<span class="t" style="left:560.50px;top:478.50px;font-size:13.2px;line-height:17px;letter-spacing:-0.313px;color:#2e2e2e;">lotNumber (string)</span>
<div class="abs" style="left:515px;top:503.46px;width:232px;height:28px;background:#f2f2f2"></div>
<span class="t" style="left:522px;top:508.46px;width:30px;text-align:center;font-size:14.5px;line-height:18px;color:#444;font-weight:bold;transform:scaleX(0.56);letter-spacing:-0.1px">abc</span>
<span class="t" style="left:560.50px;top:508.36px;font-size:13.2px;line-height:17px;letter-spacing:-0.264px;color:#2e2e2e;">position (string)</span>
<div class="abs" style="left:515px;top:533.32px;width:232px;height:28px;background:#f2f2f2"></div>
<svg class="abs" style="left:493px;top:541.32px" width="12" height="12" viewBox="0 0 12 12"><path d="M4.1 2 L8.1 6 L4.1 10" stroke="#222" stroke-width="1.7" fill="none"/></svg>
<svg class="abs" style="left:527px;top:537.22px" width="20" height="18" viewBox="0 0 20 18"><g stroke="#6a6a6a" stroke-width="1.3" fill="none" stroke-linejoin="round"><path d="M10 1.6 L18.4 5.6 L10 9.6 L1.6 5.6 Z"/><path d="M1.6 9 L10 13 L18.4 9"/><path d="M1.6 12.4 L10 16.4 L18.4 12.4"/></g></svg>
<span class="t" style="left:560.50px;top:538.22px;font-size:12.80px;line-height:17px;letter-spacing:-0.420px;color:#2e2e2e;">purchasePrice (Money)</span>
<div class="abs" style="left:515px;top:563.18px;width:232px;height:28px;background:#f2f2f2"></div>
<svg class="abs" style="left:493px;top:571.18px" width="12" height="12" viewBox="0 0 12 12"><path d="M4.1 2 L8.1 6 L4.1 10" stroke="#222" stroke-width="1.7" fill="none"/></svg>
<svg class="abs" style="left:528px;top:567.88px" width="18" height="18" viewBox="0 0 18 18"><rect x="1.2" y="2.9" width="1.9" height="1.8" fill="#6a6a6a"/><rect x="5.6" y="3.05" width="11.6" height="1.5" fill="#6a6a6a"/><rect x="1.2" y="8.1" width="1.9" height="1.8" fill="#6a6a6a"/><rect x="5.6" y="8.25" width="11.6" height="1.5" fill="#6a6a6a"/><rect x="1.2" y="13.299999999999999" width="1.9" height="1.8" fill="#6a6a6a"/><rect x="5.6" y="13.45" width="11.6" height="1.5" fill="#6a6a6a"/></svg>
<span class="t" style="left:560.50px;top:568.08px;font-size:12.72px;line-height:17px;letter-spacing:-0.420px;color:#2e2e2e;">retiredReason (RetiredRea…</span>
<div class="abs" style="left:515px;top:593.04px;width:232px;height:28px;background:#f2f2f2"></div>
<span class="t" style="left:522px;top:598.04px;width:30px;text-align:center;font-size:14.5px;line-height:18px;color:#444;font-weight:bold;transform:scaleX(0.56);letter-spacing:-0.1px">abc</span>
<span class="t" style="left:560.50px;top:597.94px;font-size:13.2px;line-height:17px;letter-spacing:-0.392px;color:#2e2e2e;">serialNumber (string)</span>
<div class="abs" style="left:515px;top:622.90px;width:232px;height:28px;background:#f2f2f2"></div>
<svg class="abs" style="left:493px;top:630.90px" width="12" height="12" viewBox="0 0 12 12"><path d="M4.1 2 L8.1 6 L4.1 10" stroke="#222" stroke-width="1.7" fill="none"/></svg>
<svg class="abs" style="left:527px;top:626.80px" width="20" height="18" viewBox="0 0 20 18"><g stroke="#6a6a6a" stroke-width="1.3" fill="none" stroke-linejoin="round"><path d="M10 1.6 L18.4 5.6 L10 9.6 L1.6 5.6 Z"/><path d="M1.6 9 L10 13 L18.4 9"/><path d="M1.6 12.4 L10 16.4 L18.4 12.4"/></g></svg>
<span class="t" style="left:560.50px;top:627.80px;font-size:12.80px;line-height:17px;letter-spacing:-0.420px;color:#2e2e2e;">status (Status)</span>
<div class="abs" style="left:515px;top:652.76px;width:232px;height:28px;background:#f2f2f2"></div>
<span class="t" style="left:522px;top:657.76px;width:30px;text-align:center;font-size:14.5px;line-height:18px;color:#444;font-weight:bold;transform:scaleX(0.56);letter-spacing:-0.1px">abc</span>
<span class="t" style="left:560.50px;top:657.66px;font-size:13.2px;line-height:17px;letter-spacing:-0.361px;color:#2e2e2e;">type (string)</span>
<div class="abs" style="left:515px;top:682.62px;width:232px;height:28px;background:#f2f2f2"></div>
<span class="t" style="left:522px;top:687.62px;width:30px;text-align:center;font-size:14.5px;line-height:18px;color:#444;font-weight:bold;transform:scaleX(0.56);letter-spacing:-0.1px">abc</span>
<span class="t" style="left:560.50px;top:687.52px;font-size:13.2px;line-height:17px;letter-spacing:-0.377px;color:#2e2e2e;">utcNumber (string)</span>
<div class="abs" style="left:515px;top:712.48px;width:232px;height:28px;background:#f2f2f2"></div>
<svg class="abs" style="left:493px;top:720.48px" width="12" height="12" viewBox="0 0 12 12"><path d="M4.1 2 L8.1 6 L4.1 10" stroke="#222" stroke-width="1.7" fill="none"/></svg>
<svg class="abs" style="left:526px;top:715.98px" width="16" height="18" viewBox="0 0 16 18"><g stroke="#6a6a6a" stroke-width="1.4" fill="none"><path d="M8 16 V3"/><path d="M3.6 7 L8 2.4 L12.4 7"/></g></svg>
<span class="t" style="left:560.50px;top:717.38px;font-size:13.2px;line-height:17px;letter-spacing:-0.306px;color:#2e2e2e;font-style:italic;">inherits: IdentifiedObject (…</span>
<div class="abs" style="left:515px;top:742.34px;width:232px;height:28px;background:#f2f2f2"></div>
<svg class="abs" style="left:493px;top:750.34px" width="12" height="12" viewBox="0 0 12 12"><path d="M4.1 2 L8.1 6 L4.1 10" stroke="#222" stroke-width="1.7" fill="none"/></svg>
<svg class="abs" style="left:525px;top:744.84px" width="18" height="18" viewBox="0 0 18 18"><line x1="5" y1="12.7" x2="13" y2="5.3" stroke="#6a6a6a" stroke-width="2.4"/><circle cx="5" cy="12.8" r="3" fill="#6a6a6a"/><circle cx="13" cy="5.2" r="3" fill="#6a6a6a"/></svg>
<span class="t" style="left:560.50px;top:747.24px;font-size:12.96px;line-height:17px;letter-spacing:-0.420px;color:#2e2e2e;">ActivityRecords (ActivityRe…</span>
<div class="abs" style="left:515px;top:772.20px;width:232px;height:28px;background:#f2f2f2"></div>
<svg class="abs" style="left:493px;top:780.20px" width="12" height="12" viewBox="0 0 12 12"><path d="M4.1 2 L8.1 6 L4.1 10" stroke="#222" stroke-width="1.7" fill="none"/></svg>
<svg class="abs" style="left:525px;top:774.70px" width="18" height="18" viewBox="0 0 18 18"><line x1="5" y1="12.7" x2="13" y2="5.3" stroke="#6a6a6a" stroke-width="2.4"/><circle cx="5" cy="12.8" r="3" fill="#6a6a6a"/><circle cx="13" cy="5.2" r="3" fill="#6a6a6a"/></svg>
<span class="t" style="left:560.50px;top:777.10px;font-size:13.2px;line-height:17px;letter-spacing:-0.416px;color:#2e2e2e;">Analytic (Analytic)</span>
<div class="abs" style="left:515px;top:802.06px;width:232px;height:28px;background:#f2f2f2"></div>
<svg class="abs" style="left:493px;top:810.06px" width="12" height="12" viewBox="0 0 12 12"><path d="M4.1 2 L8.1 6 L4.1 10" stroke="#222" stroke-width="1.7" fill="none"/></svg>
<svg class="abs" style="left:525px;top:804.56px" width="18" height="18" viewBox="0 0 18 18"><line x1="5" y1="12.7" x2="13" y2="5.3" stroke="#6a6a6a" stroke-width="2.4"/><circle cx="5" cy="12.8" r="3" fill="#6a6a6a"/><circle cx="13" cy="5.2" r="3" fill="#6a6a6a"/></svg>
<span class="t" style="left:560.50px;top:806.96px;font-size:12.90px;line-height:17px;letter-spacing:-0.420px;color:#2e2e2e;">AnalyticScore (AnalyticSco…</span>
<div class="abs" style="left:515px;top:831.92px;width:232px;height:28px;background:#f2f2f2"></div>
<svg class="abs" style="left:493px;top:839.92px" width="12" height="12" viewBox="0 0 12 12"><path d="M4.1 2 L8.1 6 L4.1 10" stroke="#222" stroke-width="1.7" fill="none"/></svg>
<svg class="abs" style="left:525px;top:834.42px" width="18" height="18" viewBox="0 0 18 18"><line x1="5" y1="12.7" x2="13" y2="5.3" stroke="#6a6a6a" stroke-width="2.4"/><circle cx="5" cy="12.8" r="3" fill="#6a6a6a"/><circle cx="13" cy="5.2" r="3" fill="#6a6a6a"/></svg>
<span class="t" style="left:560.50px;top:836.82px;font-size:12.74px;line-height:17px;letter-spacing:-0.420px;color:#2e2e2e;">AssetContainer (AssetCont…</span>
<div class="abs" style="left:1238.3px;top:49.3px;width:174.5px;height:24.6px;border:1px solid #bdbdbd;border-radius:4px;background:#fff"></div>
<span class="t" style="left:1252.00px;top:53.10px;font-size:13px;line-height:17px;letter-spacing:-0.293px;color:#2e2e2e;">Show all properties</span>
<svg class="abs" style="left:1388px;top:58.5px" width="12" height="7" viewBox="0 0 12 7"><path d="M1 1 H10.6 L5.8 5.8 Z" fill="#555"/></svg>
<svg class="abs" style="left:1425.3px;top:55.9px" width="15.4" height="11" viewBox="0 0 15.4 11"><g fill="#666666"><rect x="0" y="1.3" width="15.4" height="1.5"/><rect x="0" y="4.95" width="15.4" height="1.5"/><rect x="0" y="8.6" width="15.4" height="1.5"/></g></svg>
<svg class="abs" style="left:1450.1px;top:46px" width="24" height="24" viewBox="-12 -12 24 24"><circle cx="0" cy="0" r="5.7" fill="none" stroke="#666666" stroke-width="1.5"/><path d="M4.2 4.2 L10.3 10.3" stroke="#666666" stroke-width="1.7"/><path d="M-2.6 0 H2.6 M0 -2.6 V2.6" stroke="#666666" stroke-width="1.1"/></svg>
<svg class="abs" style="left:1484.1px;top:46px" width="24" height="24" viewBox="-12 -12 24 24"><circle cx="0" cy="0" r="5.7" fill="none" stroke="#666666" stroke-width="1.5"/><path d="M4.2 4.2 L10.3 10.3" stroke="#666666" stroke-width="1.7"/><path d="M-2.6 0 H2.6" stroke="#666666" stroke-width="1.1"/></svg>
<svg class="abs" style="left:1522px;top:52px" width="18" height="18" viewBox="0 0 18 18"><g stroke="#6b6b6b" stroke-width="1.4" fill="none" stroke-linecap="round" stroke-linejoin="round"><path d="M2 10.6 V14.9 H16 V10.6"/><path d="M9 2.4 V10.8"/><path d="M5.6 7.6 L9 11 L12.4 7.6"/></g></svg>
<svg class="abs" style="left:1551.8px;top:52.2px" width="18" height="18" viewBox="0 0 18 18"><circle cx="9" cy="9" r="7.5" stroke="#666666" stroke-width="1.6" fill="none"/><path d="M6.2 6.2 L11.8 11.8 M11.8 6.2 L6.2 11.8" stroke="#666666" stroke-width="1.5"/></svg>
<svg class="abs" style="left:1580px;top:49px" width="22" height="20" viewBox="0 0 22 20"><g stroke="#757575" stroke-width="1.3" fill="none"><rect x="12.6" y="1.9" width="7" height="6.6"/><rect x="2.4" y="12" width="7" height="6.6"/><rect x="12.6" y="12" width="7" height="6.6"/><path d="M5.9 12 V5.2 H12.6"/><path d="M16.1 8.5 V12"/></g></svg>
<div id="dg" class="abs" style="left:769px;top:79px;width:839.2px;height:785.5px;background:#f4f5fb;overflow:hidden"><div class="abs" style="left:-769px;top:-79px;width:1920px;height:1080px">
<svg class="abs" style="left:0;top:0" width="1920" height="1080" viewBox="0 0 1920 1080"><g stroke="#2fa3a9" stroke-width="1.25" fill="none" stroke-linejoin="round"><path d="M1165 288.7 L1235.7 232.3"/><path d="M1364 183.6 H1539.3 V312"/><path d="M1165 361.7 L1245 358.4"/><path d="M1165 432.7 L1224 473.5"/><path d="M1373.3 471.8 L1469 405.2"/><path d="M1539.3 405.5 V529"/><path d="M1074.3 579 L1075.3 630.6"/><path d="M929.2 696.9 H996"/><path d="M971.8 365.6 H852.6 V621.6"/></g>
</svg>
<div class="ent" style="left:975.30px;top:155.90px;width:189.50px;height:421.42px"></div>
<div class="abs" style="left:975.30px;top:175.70px;width:189.50px;height:17.10px;background:#e1e1e1"></div>
<div class="abs" style="left:975.30px;top:192.80px;width:189.50px;height:381.92px;background:#fff"></div>
<svg class="abs" style="left:978.90px;top:161.30px" width="12" height="10" viewBox="0 0 12 10"><rect x="0.9" y="1.2" width="10" height="7.4" fill="none" stroke="#5f6b6b" stroke-width="0.9"/><rect x="0.5" y="0.6" width="10.8" height="1.9" fill="#5f6b6b"/></svg>
<span class="t d" style="left:994.60px;top:161.40px;color:#4b5a5a;font-size:8.4px">Asset</span>
<svg class="abs" style="left:980.20px;top:180.25px" width="10" height="9" viewBox="0 0 10 9"><path d="M1.5 2.4 L5 5.9 L8.5 2.4" stroke="#222" stroke-width="2.3" fill="none"/></svg>
<span class="t d" style="left:1001.80px;top:179.05px">Properties</span>
<div class="abs" style="left:975.30px;top:192.70px;width:189.50px;height:1.1px;background:#d3e7e6"></div>
<span class="t" style="left:979.3px;top:200.28px;width:12px;text-align:center;font-size:5.6px;line-height:8px;font-weight:bold;color:#333;letter-spacing:-0.2px">abc</span>
<span class="t d" style="left:1001.80px;top:196.78px">baselineCondition</span>
<span class="t d" style="left:975.30px;width:177.50px;text-align:right;top:196.78px">string</span>
<div class="abs" style="left:975.30px;top:209.66px;width:189.50px;height:1.1px;background:#b9d7d6"></div>
<span class="t" style="left:978.8px;top:217.64px;width:12px;text-align:center;font-size:5px;line-height:8px;color:#666;letter-spacing:-0.2px">0/1</span>
<span class="t d" style="left:1001.80px;top:214.14px">critical</span>
<span class="t d" style="left:975.30px;width:177.50px;text-align:right;top:214.14px">boolean</span>
<div class="abs" style="left:975.30px;top:227.02px;width:189.50px;height:1.1px;background:#b9d7d6"></div>
<span class="t" style="left:979.3px;top:235.00px;width:12px;text-align:center;font-size:5.6px;line-height:8px;font-weight:bold;color:#333;letter-spacing:-0.2px">abc</span>
<span class="t d" style="left:1001.80px;top:231.50px">lotNumber</span>
<span class="t d" style="left:975.30px;width:177.50px;text-align:right;top:231.50px">string</span>
<div class="abs" style="left:975.30px;top:244.38px;width:189.50px;height:1.1px;background:#b9d7d6"></div>
<span class="t" style="left:979.3px;top:252.36px;width:12px;text-align:center;font-size:5.6px;line-height:8px;font-weight:bold;color:#333;letter-spacing:-0.2px">abc</span>
<span class="t d" style="left:1001.80px;top:248.86px">position</span>
<span class="t d" style="left:975.30px;width:177.50px;text-align:right;top:248.86px">string</span>
<div class="abs" style="left:975.30px;top:261.74px;width:189.50px;height:1.1px;background:#b9d7d6"></div>
<span class="t" style="left:979.3px;top:269.72px;width:12px;text-align:center;font-size:5.6px;line-height:8px;font-weight:bold;color:#333;letter-spacing:-0.2px">abc</span>
<span class="t d" style="left:1001.80px;top:266.22px">serialNumber</span>
<span class="t d" style="left:975.30px;width:177.50px;text-align:right;top:266.22px">string</span>
<div class="abs" style="left:975.30px;top:279.10px;width:189.50px;height:1.1px;background:#b9d7d6"></div>
<span class="t" style="left:979.3px;top:287.08px;width:12px;text-align:center;font-size:5.6px;line-height:8px;font-weight:bold;color:#333;letter-spacing:-0.2px">abc</span>
<span class="t d" style="left:1001.80px;top:283.58px">type</span>
<span class="t d" style="left:975.30px;width:177.50px;text-align:right;top:283.58px">string</span>
<div class="abs" style="left:975.30px;top:296.46px;width:189.50px;height:1.1px;background:#b9d7d6"></div>
<span class="t" style="left:979.3px;top:304.44px;width:12px;text-align:center;font-size:5.6px;line-height:8px;font-weight:bold;color:#333;letter-spacing:-0.2px">abc</span>
<span class="t d" style="left:1001.80px;top:300.94px">utcNumber</span>
<span class="t d" style="left:975.30px;width:177.50px;text-align:right;top:300.94px">string</span>
<div class="abs" style="left:975.30px;top:313.82px;width:189.50px;height:1.1px;background:#b9d7d6"></div>
<svg class="abs" style="left:980.3px;top:318.50px" width="10" height="9" viewBox="0 0 10 9"><g stroke="#555" stroke-width="0.65" fill="none"><path d="M5 0.6 L9.2 2.5 L5 4.4 L0.8 2.5 Z"/><path d="M0.8 4.3 L5 6.2 L9.2 4.3"/><path d="M0.8 6.1 L5 8 L9.2 6.1"/></g></svg>
<span class="t d" style="left:1001.80px;top:318.30px">acceptanceTest</span>
<span class="t d" style="left:975.30px;width:177.50px;text-align:right;top:318.30px">AcceptanceTest</span>
<div class="abs" style="left:975.30px;top:331.18px;width:189.50px;height:1.1px;background:#b9d7d6"></div>
<svg class="abs" style="left:980.3px;top:335.86px" width="10" height="9" viewBox="0 0 10 9"><g stroke="#555" stroke-width="0.65" fill="none"><path d="M5 0.6 L9.2 2.5 L5 4.4 L0.8 2.5 Z"/><path d="M0.8 4.3 L5 6.2 L9.2 4.3"/><path d="M0.8 6.1 L5 8 L9.2 6.1"/></g></svg>
<span class="t d" style="left:1001.80px;top:335.66px">baselineLossOfLife</span>
<span class="t d" style="left:975.30px;width:177.50px;text-align:right;top:335.66px">PerCent</span>
<div class="abs" style="left:975.30px;top:348.54px;width:189.50px;height:1.1px;background:#b9d7d6"></div>
<svg class="abs" style="left:980.3px;top:353.22px" width="10" height="9" viewBox="0 0 10 9"><g stroke="#555" stroke-width="0.65" fill="none"><path d="M5 0.6 L9.2 2.5 L5 4.4 L0.8 2.5 Z"/><path d="M0.8 4.3 L5 6.2 L9.2 4.3"/><path d="M0.8 6.1 L5 8 L9.2 6.1"/></g></svg>
<span class="t d" style="left:1001.80px;top:353.02px">electronicAddress</span>
<span class="t d" style="left:975.30px;width:177.50px;text-align:right;top:353.02px">ElectronicAddress</span>
<div class="abs" style="left:975.30px;top:365.90px;width:189.50px;height:1.1px;background:#b9d7d6"></div>
<svg class="abs" style="left:980.3px;top:370.58px" width="10" height="9" viewBox="0 0 10 9"><g stroke="#555" stroke-width="0.65" fill="none"><path d="M5 0.6 L9.2 2.5 L5 4.4 L0.8 2.5 Z"/><path d="M0.8 4.3 L5 6.2 L9.2 4.3"/><path d="M0.8 6.1 L5 8 L9.2 6.1"/></g></svg>
<span class="t d" style="left:1001.80px;top:370.38px">inUseDate</span>
<span class="t d" style="left:975.30px;width:177.50px;text-align:right;top:370.38px">InUseDate</span>
<div class="abs" style="left:975.30px;top:383.26px;width:189.50px;height:1.1px;background:#b9d7d6"></div>
<svg class="abs" style="left:980.6999999999999px;top:387.94px" width="9" height="9" viewBox="0 0 9 9"><rect x="0.6" y="1.45" width="1.1" height="0.9" fill="#666"/><rect x="2.9" y="1.45" width="5.6" height="0.9" fill="#555"/><rect x="0.6" y="4.05" width="1.1" height="0.9" fill="#666"/><rect x="2.9" y="4.05" width="5.6" height="0.9" fill="#555"/><rect x="0.6" y="6.6499999999999995" width="1.1" height="0.9" fill="#666"/><rect x="2.9" y="6.6499999999999995" width="5.6" height="0.9" fill="#555"/></svg>
<span class="t d" style="left:1001.80px;top:387.74px">inUseState</span>
<span class="t d" style="left:975.30px;width:177.50px;text-align:right;top:387.74px">InUseStateKind</span>
<div class="abs" style="left:975.30px;top:400.62px;width:189.50px;height:1.1px;background:#b9d7d6"></div>
<svg class="abs" style="left:980.6999999999999px;top:405.30px" width="9" height="9" viewBox="0 0 9 9"><rect x="0.6" y="1.45" width="1.1" height="0.9" fill="#666"/><rect x="2.9" y="1.45" width="5.6" height="0.9" fill="#555"/><rect x="0.6" y="4.05" width="1.1" height="0.9" fill="#666"/><rect x="2.9" y="4.05" width="5.6" height="0.9" fill="#555"/><rect x="0.6" y="6.6499999999999995" width="1.1" height="0.9" fill="#666"/><rect x="2.9" y="6.6499999999999995" width="5.6" height="0.9" fill="#555"/></svg>
<span class="t d" style="left:1001.80px;top:405.10px">kind</span>
<span class="t d" style="left:975.30px;width:177.50px;text-align:right;top:405.10px">AssetKind</span>
<div class="abs" style="left:975.30px;top:417.98px;width:189.50px;height:1.1px;background:#b9d7d6"></div>
<svg class="abs" style="left:980.3px;top:422.66px" width="10" height="9" viewBox="0 0 10 9"><g stroke="#555" stroke-width="0.65" fill="none"><path d="M5 0.6 L9.2 2.5 L5 4.4 L0.8 2.5 Z"/><path d="M0.8 4.3 L5 6.2 L9.2 4.3"/><path d="M0.8 6.1 L5 8 L9.2 6.1"/></g></svg>
<span class="t d" style="left:1001.80px;top:422.46px">lifecycleDate</span>
<span class="t d" style="left:975.30px;width:177.50px;text-align:right;top:422.46px">LifecycleDate</span>
<div class="abs" style="left:975.30px;top:435.34px;width:189.50px;height:1.1px;background:#b9d7d6"></div>
<svg class="abs" style="left:980.6999999999999px;top:440.02px" width="9" height="9" viewBox="0 0 9 9"><rect x="0.6" y="1.45" width="1.1" height="0.9" fill="#666"/><rect x="2.9" y="1.45" width="5.6" height="0.9" fill="#555"/><rect x="0.6" y="4.05" width="1.1" height="0.9" fill="#666"/><rect x="2.9" y="4.05" width="5.6" height="0.9" fill="#555"/><rect x="0.6" y="6.6499999999999995" width="1.1" height="0.9" fill="#666"/><rect x="2.9" y="6.6499999999999995" width="5.6" height="0.9" fill="#555"/></svg>
<span class="t d" style="left:1001.80px;top:439.82px">lifecycleState</span>
<span class="t d" style="left:975.30px;width:177.50px;text-align:right;top:439.82px">AssetLifecycleStateKind</span>
<div class="abs" style="left:975.30px;top:452.70px;width:189.50px;height:1.1px;background:#b9d7d6"></div>
<svg class="abs" style="left:980.3px;top:457.38px" width="10" height="9" viewBox="0 0 10 9"><g stroke="#555" stroke-width="0.65" fill="none"><path d="M5 0.6 L9.2 2.5 L5 4.4 L0.8 2.5 Z"/><path d="M0.8 4.3 L5 6.2 L9.2 4.3"/><path d="M0.8 6.1 L5 8 L9.2 6.1"/></g></svg>
<span class="t d" style="left:1001.80px;top:457.18px">purchasePrice</span>
<span class="t d" style="left:975.30px;width:177.50px;text-align:right;top:457.18px">Money</span>
<div class="abs" style="left:975.30px;top:470.06px;width:189.50px;height:1.1px;background:#b9d7d6"></div>
<svg class="abs" style="left:980.6999999999999px;top:474.74px" width="9" height="9" viewBox="0 0 9 9"><rect x="0.6" y="1.45" width="1.1" height="0.9" fill="#666"/><rect x="2.9" y="1.45" width="5.6" height="0.9" fill="#555"/><rect x="0.6" y="4.05" width="1.1" height="0.9" fill="#666"/><rect x="2.9" y="4.05" width="5.6" height="0.9" fill="#555"/><rect x="0.6" y="6.6499999999999995" width="1.1" height="0.9" fill="#666"/><rect x="2.9" y="6.6499999999999995" width="5.6" height="0.9" fill="#555"/></svg>
<span class="t d" style="left:1001.80px;top:474.54px">retiredReason</span>
<span class="t d" style="left:975.30px;width:177.50px;text-align:right;top:474.54px">RetiredReasonKind</span>
<div class="abs" style="left:975.30px;top:487.42px;width:189.50px;height:1.1px;background:#b9d7d6"></div>
<svg class="abs" style="left:980.3px;top:492.10px" width="10" height="9" viewBox="0 0 10 9"><g stroke="#555" stroke-width="0.65" fill="none"><path d="M5 0.6 L9.2 2.5 L5 4.4 L0.8 2.5 Z"/><path d="M0.8 4.3 L5 6.2 L9.2 4.3"/><path d="M0.8 6.1 L5 8 L9.2 6.1"/></g></svg>
<span class="t d" style="left:1001.80px;top:491.90px">status</span>
<span class="t d" style="left:975.30px;width:177.50px;text-align:right;top:491.90px">Status</span>
<div class="abs" style="left:975.30px;top:504.78px;width:189.50px;height:1.1px;background:#b9d7d6"></div>
<svg class="abs" style="left:980.8px;top:511.36px" width="9" height="8" viewBox="0 0 9 8"><line x1="1.9" y1="5.9" x2="6.9" y2="2.1" stroke="#555" stroke-width="0.95"/><circle cx="1.9" cy="5.9" r="1.35" fill="#555"/><circle cx="6.9" cy="2.1" r="1.35" fill="#555"/></svg>
<span class="t d" style="left:1001.80px;top:509.26px">Medium</span>
<span class="t d" style="left:975.30px;width:177.50px;text-align:right;top:509.26px">Medium</span>
<div class="abs" style="left:975.30px;top:522.14px;width:189.50px;height:1.1px;background:#b9d7d6"></div>
<svg class="abs" style="left:980.8px;top:528.72px" width="9" height="8" viewBox="0 0 9 8"><line x1="1.9" y1="5.9" x2="6.9" y2="2.1" stroke="#555" stroke-width="0.95"/><circle cx="1.9" cy="5.9" r="1.35" fill="#555"/><circle cx="6.9" cy="2.1" r="1.35" fill="#555"/></svg>
<span class="t d" style="left:1001.80px;top:526.62px">Ownerships</span>
<span class="t d" style="left:975.30px;width:177.50px;text-align:right;top:526.62px">Ownership</span>
<div class="abs" style="left:975.30px;top:539.50px;width:189.50px;height:1.1px;background:#b9d7d6"></div>
<svg class="abs" style="left:980.8px;top:546.08px" width="9" height="8" viewBox="0 0 9 8"><line x1="1.9" y1="5.9" x2="6.9" y2="2.1" stroke="#555" stroke-width="0.95"/><circle cx="1.9" cy="5.9" r="1.35" fill="#555"/><circle cx="6.9" cy="2.1" r="1.35" fill="#555"/></svg>
<span class="t d" style="left:1001.80px;top:543.98px">Procedures</span>
<span class="t d" style="left:975.30px;width:177.50px;text-align:right;top:543.98px">Procedure</span>
<div class="abs" style="left:975.30px;top:556.86px;width:189.50px;height:1.1px;background:#b9d7d6"></div>
<svg class="abs" style="left:980.8px;top:563.44px" width="9" height="8" viewBox="0 0 9 8"><line x1="1.9" y1="5.9" x2="6.9" y2="2.1" stroke="#555" stroke-width="0.95"/><circle cx="1.9" cy="5.9" r="1.35" fill="#555"/><circle cx="6.9" cy="2.1" r="1.35" fill="#555"/></svg>
<span class="t d" style="left:1001.80px;top:561.34px">ReliabilityInfos</span>
<span class="t d" style="left:975.30px;width:177.50px;text-align:right;top:561.34px">ReliabilityInfo</span>
<div class="ent" style="left:1234.25px;top:139.25px;width:129.50px;height:91.58px"></div>
<div class="abs" style="left:1234.25px;top:159.05px;width:129.50px;height:17.10px;background:#e1e1e1"></div>
<div class="abs" style="left:1234.25px;top:176.15px;width:129.50px;height:52.08px;background:#fff"></div>
<svg class="abs" style="left:1237.85px;top:144.65px" width="12" height="10" viewBox="0 0 12 10"><rect x="0.9" y="1.2" width="10" height="7.4" fill="none" stroke="#5f6b6b" stroke-width="0.9"/><rect x="0.5" y="0.6" width="10.8" height="1.9" fill="#5f6b6b"/></svg>
<span class="t d" style="left:1253.55px;top:144.75px;color:#4b5a5a;font-size:8.4px">Medium</span>
<svg class="abs" style="left:1239.15px;top:163.60px" width="10" height="9" viewBox="0 0 10 9"><path d="M1.5 2.4 L5 5.9 L8.5 2.4" stroke="#222" stroke-width="2.3" fill="none"/></svg>
<span class="t d" style="left:1260.75px;top:162.40px">Properties</span>
<div class="abs" style="left:1234.25px;top:176.05px;width:129.50px;height:1.1px;background:#d3e7e6"></div>
<svg class="abs" style="left:1239.65px;top:180.33px" width="9" height="9" viewBox="0 0 9 9"><rect x="0.6" y="1.45" width="1.1" height="0.9" fill="#666"/><rect x="2.9" y="1.45" width="5.6" height="0.9" fill="#555"/><rect x="0.6" y="4.05" width="1.1" height="0.9" fill="#666"/><rect x="2.9" y="4.05" width="5.6" height="0.9" fill="#555"/><rect x="0.6" y="6.6499999999999995" width="1.1" height="0.9" fill="#666"/><rect x="2.9" y="6.6499999999999995" width="5.6" height="0.9" fill="#555"/></svg>
<span class="t d" style="left:1260.75px;top:180.13px">kind</span>
<span class="t d" style="left:1234.25px;width:117.50px;text-align:right;top:180.13px">MediumKind</span>
<div class="abs" style="left:1234.25px;top:193.01px;width:129.50px;height:1.1px;background:#b9d7d6"></div>
<svg class="abs" style="left:1239.25px;top:197.69px" width="10" height="9" viewBox="0 0 10 9"><g stroke="#555" stroke-width="0.65" fill="none"><path d="M5 0.6 L9.2 2.5 L5 4.4 L0.8 2.5 Z"/><path d="M0.8 4.3 L5 6.2 L9.2 4.3"/><path d="M0.8 6.1 L5 8 L9.2 6.1"/></g></svg>
<span class="t d" style="left:1260.75px;top:197.49px">volumeSpec</span>
<span class="t d" style="left:1234.25px;width:117.50px;text-align:right;top:197.49px">Volume</span>
<div class="abs" style="left:1234.25px;top:210.37px;width:129.50px;height:1.1px;background:#b9d7d6"></div>
<svg class="abs" style="left:1239.75px;top:216.95px" width="9" height="8" viewBox="0 0 9 8"><line x1="1.9" y1="5.9" x2="6.9" y2="2.1" stroke="#555" stroke-width="0.95"/><circle cx="1.9" cy="5.9" r="1.35" fill="#555"/><circle cx="6.9" cy="2.1" r="1.35" fill="#555"/></svg>
<span class="t d" style="left:1260.75px;top:214.85px">Asset</span>
<span class="t d" style="left:1234.25px;width:117.50px;text-align:right;top:214.85px">Asset</span>
<div class="ent" style="left:1245.00px;top:321.30px;width:108.10px;height:74.22px"></div>
<div class="abs" style="left:1245.00px;top:341.10px;width:108.10px;height:17.10px;background:#e1e1e1"></div>
<div class="abs" style="left:1245.00px;top:358.20px;width:108.10px;height:34.72px;background:#fff"></div>
<svg class="abs" style="left:1248.60px;top:326.70px" width="12" height="10" viewBox="0 0 12 10"><rect x="0.9" y="1.2" width="10" height="7.4" fill="none" stroke="#5f6b6b" stroke-width="0.9"/><rect x="0.5" y="0.6" width="10.8" height="1.9" fill="#5f6b6b"/></svg>
<span class="t d" style="left:1264.30px;top:326.80px;color:#4b5a5a;font-size:8.4px">Ownership</span>
<svg class="abs" style="left:1249.90px;top:345.65px" width="10" height="9" viewBox="0 0 10 9"><path d="M1.5 2.4 L5 5.9 L8.5 2.4" stroke="#222" stroke-width="2.3" fill="none"/></svg>
<span class="t d" style="left:1271.50px;top:344.45px">Properties</span>
<div class="abs" style="left:1245.00px;top:358.10px;width:108.10px;height:1.1px;background:#d3e7e6"></div>
<svg class="abs" style="left:1250px;top:362.38px" width="10" height="9" viewBox="0 0 10 9"><g stroke="#555" stroke-width="0.65" fill="none"><path d="M5 0.6 L9.2 2.5 L5 4.4 L0.8 2.5 Z"/><path d="M0.8 4.3 L5 6.2 L9.2 4.3"/><path d="M0.8 6.1 L5 8 L9.2 6.1"/></g></svg>
<span class="t d" style="left:1271.50px;top:362.18px">share</span>
<span class="t d" style="left:1245.00px;width:96.10px;text-align:right;top:362.18px">PerCent</span>
<div class="abs" style="left:1245.00px;top:375.06px;width:108.10px;height:1.1px;background:#b9d7d6"></div>
<svg class="abs" style="left:1250.5px;top:381.64px" width="9" height="8" viewBox="0 0 9 8"><line x1="1.9" y1="5.9" x2="6.9" y2="2.1" stroke="#555" stroke-width="0.95"/><circle cx="1.9" cy="5.9" r="1.35" fill="#555"/><circle cx="6.9" cy="2.1" r="1.35" fill="#555"/></svg>
<span class="t d" style="left:1271.50px;top:379.54px">Asset</span>
<span class="t d" style="left:1245.00px;width:96.10px;text-align:right;top:379.54px">Asset</span>
<div class="ent" style="left:1421.60px;top:312.40px;width:239.30px;height:91.58px"></div>
<div class="abs" style="left:1421.60px;top:332.20px;width:239.30px;height:17.10px;background:#e1e1e1"></div>
<div class="abs" style="left:1421.60px;top:349.30px;width:239.30px;height:52.08px;background:#fff"></div>
<svg class="abs" style="left:1425.20px;top:317.80px" width="12" height="10" viewBox="0 0 12 10"><rect x="0.9" y="1.2" width="10" height="7.4" fill="none" stroke="#5f6b6b" stroke-width="0.9"/><rect x="0.5" y="0.6" width="10.8" height="1.9" fill="#5f6b6b"/></svg>
<span class="t d" style="left:1440.90px;top:317.90px;color:#4b5a5a;font-size:8.4px">Specification</span>
<svg class="abs" style="left:1426.50px;top:336.75px" width="10" height="9" viewBox="0 0 10 9"><path d="M1.5 2.4 L5 5.9 L8.5 2.4" stroke="#222" stroke-width="2.3" fill="none"/></svg>
<span class="t d" style="left:1448.10px;top:335.55px">Properties</span>
<div class="abs" style="left:1421.60px;top:349.20px;width:239.30px;height:1.1px;background:#d3e7e6"></div>
<svg class="abs" style="left:1427.1px;top:355.38px" width="9" height="8" viewBox="0 0 9 8"><line x1="1.9" y1="5.9" x2="6.9" y2="2.1" stroke="#555" stroke-width="0.95"/><circle cx="1.9" cy="5.9" r="1.35" fill="#555"/><circle cx="6.9" cy="2.1" r="1.35" fill="#555"/></svg>
<span class="t d" style="left:1448.10px;top:353.28px">Mediums</span>
<span class="t d" style="left:1421.60px;width:227.30px;text-align:right;top:353.28px">Medium</span>
<div class="abs" style="left:1421.60px;top:366.16px;width:239.30px;height:1.1px;background:#b9d7d6"></div>
<svg class="abs" style="left:1427.1px;top:372.74px" width="9" height="8" viewBox="0 0 9 8"><line x1="1.9" y1="5.9" x2="6.9" y2="2.1" stroke="#555" stroke-width="0.95"/><circle cx="1.9" cy="5.9" r="1.35" fill="#555"/><circle cx="6.9" cy="2.1" r="1.35" fill="#555"/></svg>
<span class="t d" style="left:1448.10px;top:370.64px">QualificationRequirements</span>
<span class="t d" style="left:1421.60px;width:227.30px;text-align:right;top:370.64px">QualificationRequirement</span>
<div class="abs" style="left:1421.60px;top:383.52px;width:239.30px;height:1.1px;background:#b9d7d6"></div>
<svg class="abs" style="left:1427.1px;top:390.10px" width="9" height="8" viewBox="0 0 9 8"><line x1="1.9" y1="5.9" x2="6.9" y2="2.1" stroke="#555" stroke-width="0.95"/><circle cx="1.9" cy="5.9" r="1.35" fill="#555"/><circle cx="6.9" cy="2.1" r="1.35" fill="#555"/></svg>
<span class="t d" style="left:1448.10px;top:388.00px">ReliabilityInfos</span>
<span class="t d" style="left:1421.60px;width:227.30px;text-align:right;top:388.00px">ReliabilityInfo</span>
<div class="ent" style="left:1224.60px;top:472.40px;width:148.70px;height:108.94px"></div>
<div class="abs" style="left:1224.60px;top:492.20px;width:148.70px;height:17.10px;background:#e1e1e1"></div>
<div class="abs" style="left:1224.60px;top:509.30px;width:148.70px;height:69.44px;background:#fff"></div>
<svg class="abs" style="left:1228.20px;top:477.80px" width="12" height="10" viewBox="0 0 12 10"><rect x="0.9" y="1.2" width="10" height="7.4" fill="none" stroke="#5f6b6b" stroke-width="0.9"/><rect x="0.5" y="0.6" width="10.8" height="1.9" fill="#5f6b6b"/></svg>
<span class="t d" style="left:1243.90px;top:477.90px;color:#4b5a5a;font-size:8.4px">ReliabilityInfo</span>
<svg class="abs" style="left:1229.50px;top:496.75px" width="10" height="9" viewBox="0 0 10 9"><path d="M1.5 2.4 L5 5.9 L8.5 2.4" stroke="#222" stroke-width="2.3" fill="none"/></svg>
<span class="t d" style="left:1251.10px;top:495.55px">Properties</span>
<div class="abs" style="left:1224.60px;top:509.20px;width:148.70px;height:1.1px;background:#d3e7e6"></div>
<svg class="abs" style="left:1229.6px;top:513.48px" width="10" height="9" viewBox="0 0 10 9"><g stroke="#555" stroke-width="0.65" fill="none"><path d="M5 0.6 L9.2 2.5 L5 4.4 L0.8 2.5 Z"/><path d="M0.8 4.3 L5 6.2 L9.2 4.3"/><path d="M0.8 6.1 L5 8 L9.2 6.1"/></g></svg>
<span class="t d" style="left:1251.10px;top:513.28px">mTTR</span>
<span class="t d" style="left:1224.60px;width:136.70px;text-align:right;top:513.28px">Hours</span>
<div class="abs" style="left:1224.60px;top:526.16px;width:148.70px;height:1.1px;background:#b9d7d6"></div>
<svg class="abs" style="left:1229.6px;top:530.84px" width="10" height="9" viewBox="0 0 10 9"><g stroke="#555" stroke-width="0.65" fill="none"><path d="M5 0.6 L9.2 2.5 L5 4.4 L0.8 2.5 Z"/><path d="M0.8 4.3 L5 6.2 L9.2 4.3"/><path d="M0.8 6.1 L5 8 L9.2 6.1"/></g></svg>
<span class="t d" style="left:1251.10px;top:530.64px">momFailureRate</span>
<span class="t d" style="left:1224.60px;width:136.70px;text-align:right;top:530.64px">PerCent</span>
<div class="abs" style="left:1224.60px;top:543.52px;width:148.70px;height:1.1px;background:#b9d7d6"></div>
<svg class="abs" style="left:1230.1px;top:550.10px" width="9" height="8" viewBox="0 0 9 8"><line x1="1.9" y1="5.9" x2="6.9" y2="2.1" stroke="#555" stroke-width="0.95"/><circle cx="1.9" cy="5.9" r="1.35" fill="#555"/><circle cx="6.9" cy="2.1" r="1.35" fill="#555"/></svg>
<span class="t d" style="left:1251.10px;top:548.00px">Assets</span>
<span class="t d" style="left:1224.60px;width:136.70px;text-align:right;top:548.00px">Asset</span>
<div class="abs" style="left:1224.60px;top:560.88px;width:148.70px;height:1.1px;background:#b9d7d6"></div>
<svg class="abs" style="left:1230.1px;top:567.46px" width="9" height="8" viewBox="0 0 9 8"><line x1="1.9" y1="5.9" x2="6.9" y2="2.1" stroke="#555" stroke-width="0.95"/><circle cx="1.9" cy="5.9" r="1.35" fill="#555"/><circle cx="6.9" cy="2.1" r="1.35" fill="#555"/></svg>
<span class="t d" style="left:1251.10px;top:565.36px">Specification</span>
<span class="t d" style="left:1224.60px;width:136.70px;text-align:right;top:565.36px">Specification</span>
<div class="ent" style="left:1464.50px;top:534.00px;width:152.40px;height:74.22px"></div>
<div class="abs" style="left:1464.50px;top:553.80px;width:152.40px;height:17.10px;background:#e1e1e1"></div>
<div class="abs" style="left:1464.50px;top:570.90px;width:152.40px;height:34.72px;background:#fff"></div>
<svg class="abs" style="left:1468.10px;top:539.40px" width="12" height="10" viewBox="0 0 12 10"><rect x="0.9" y="1.2" width="10" height="7.4" fill="none" stroke="#5f6b6b" stroke-width="0.9"/><rect x="0.5" y="0.6" width="10.8" height="1.9" fill="#5f6b6b"/></svg>
<span class="t d" style="left:1483.80px;top:539.50px;color:#4b5a5a;font-size:8.4px">QualificationRequirement</span>
<svg class="abs" style="left:1469.40px;top:558.35px" width="10" height="9" viewBox="0 0 10 9"><path d="M1.5 2.4 L5 5.9 L8.5 2.4" stroke="#222" stroke-width="2.3" fill="none"/></svg>
<span class="t d" style="left:1491.00px;top:557.15px">Properties</span>
<div class="abs" style="left:1464.50px;top:570.80px;width:152.40px;height:1.1px;background:#d3e7e6"></div>
<span class="t" style="left:1468.5px;top:578.38px;width:12px;text-align:center;font-size:5.6px;line-height:8px;font-weight:bold;color:#333;letter-spacing:-0.2px">abc</span>
<span class="t d" style="left:1491.00px;top:574.88px">qualificationID</span>
<span class="t d" style="left:1464.50px;width:140.40px;text-align:right;top:574.88px">string</span>
<div class="abs" style="left:1464.50px;top:587.76px;width:152.40px;height:1.1px;background:#b9d7d6"></div>
<svg class="abs" style="left:1470.0px;top:594.34px" width="9" height="8" viewBox="0 0 9 8"><line x1="1.9" y1="5.9" x2="6.9" y2="2.1" stroke="#555" stroke-width="0.95"/><circle cx="1.9" cy="5.9" r="1.35" fill="#555"/><circle cx="6.9" cy="2.1" r="1.35" fill="#555"/></svg>
<span class="t d" style="left:1491.00px;top:592.24px">Specifications</span>
<span class="t d" style="left:1464.50px;width:140.40px;text-align:right;top:592.24px">Specification</span>
<div class="ent" style="left:780.10px;top:626.70px;width:149.10px;height:143.66px"></div>
<div class="abs" style="left:780.10px;top:646.50px;width:149.10px;height:17.10px;background:#e1e1e1"></div>
<div class="abs" style="left:780.10px;top:663.60px;width:149.10px;height:104.16px;background:#fff"></div>
<svg class="abs" style="left:783.70px;top:632.10px" width="12" height="10" viewBox="0 0 12 10"><rect x="0.9" y="1.2" width="10" height="7.4" fill="none" stroke="#5f6b6b" stroke-width="0.9"/><rect x="0.5" y="0.6" width="10.8" height="1.9" fill="#5f6b6b"/></svg>
<span class="t d" style="left:799.40px;top:632.20px;color:#4b5a5a;font-size:8.4px">Measurement</span>
<svg class="abs" style="left:785.00px;top:651.05px" width="10" height="9" viewBox="0 0 10 9"><path d="M1.5 2.4 L5 5.9 L8.5 2.4" stroke="#222" stroke-width="2.3" fill="none"/></svg>
<span class="t d" style="left:806.60px;top:649.85px">Properties</span>
<div class="abs" style="left:780.10px;top:663.50px;width:149.10px;height:1.1px;background:#d3e7e6"></div>
<span class="t" style="left:784.1px;top:671.08px;width:12px;text-align:center;font-size:5.6px;line-height:8px;font-weight:bold;color:#333;letter-spacing:-0.2px">abc</span>
<span class="t d" style="left:806.60px;top:667.58px">measurementType</span>
<span class="t d" style="left:780.10px;width:137.10px;text-align:right;top:667.58px">string</span>
<div class="abs" style="left:780.10px;top:680.46px;width:149.10px;height:1.1px;background:#b9d7d6"></div>
<svg class="abs" style="left:785.5px;top:685.14px" width="9" height="9" viewBox="0 0 9 9"><rect x="0.6" y="1.45" width="1.1" height="0.9" fill="#666"/><rect x="2.9" y="1.45" width="5.6" height="0.9" fill="#555"/><rect x="0.6" y="4.05" width="1.1" height="0.9" fill="#666"/><rect x="2.9" y="4.05" width="5.6" height="0.9" fill="#555"/><rect x="0.6" y="6.6499999999999995" width="1.1" height="0.9" fill="#666"/><rect x="2.9" y="6.6499999999999995" width="5.6" height="0.9" fill="#555"/></svg>
<span class="t d" style="left:806.60px;top:684.94px">phases</span>
<span class="t d" style="left:780.10px;width:137.10px;text-align:right;top:684.94px">PhaseCode</span>
<div class="abs" style="left:780.10px;top:697.82px;width:149.10px;height:1.1px;background:#b9d7d6"></div>
<svg class="abs" style="left:785.5px;top:702.50px" width="9" height="9" viewBox="0 0 9 9"><rect x="0.6" y="1.45" width="1.1" height="0.9" fill="#666"/><rect x="2.9" y="1.45" width="5.6" height="0.9" fill="#555"/><rect x="0.6" y="4.05" width="1.1" height="0.9" fill="#666"/><rect x="2.9" y="4.05" width="5.6" height="0.9" fill="#555"/><rect x="0.6" y="6.6499999999999995" width="1.1" height="0.9" fill="#666"/><rect x="2.9" y="6.6499999999999995" width="5.6" height="0.9" fill="#555"/></svg>
<span class="t d" style="left:806.60px;top:702.30px">unitMultiplier</span>
<span class="t d" style="left:780.10px;width:137.10px;text-align:right;top:702.30px">UnitMultiplier</span>
<div class="abs" style="left:780.10px;top:715.18px;width:149.10px;height:1.1px;background:#b9d7d6"></div>
<svg class="abs" style="left:785.5px;top:719.86px" width="9" height="9" viewBox="0 0 9 9"><rect x="0.6" y="1.45" width="1.1" height="0.9" fill="#666"/><rect x="2.9" y="1.45" width="5.6" height="0.9" fill="#555"/><rect x="0.6" y="4.05" width="1.1" height="0.9" fill="#666"/><rect x="2.9" y="4.05" width="5.6" height="0.9" fill="#555"/><rect x="0.6" y="6.6499999999999995" width="1.1" height="0.9" fill="#666"/><rect x="2.9" y="6.6499999999999995" width="5.6" height="0.9" fill="#555"/></svg>
<span class="t d" style="left:806.60px;top:719.66px">unitSymbol</span>
<span class="t d" style="left:780.10px;width:137.10px;text-align:right;top:719.66px">UnitSymbol</span>
<div class="abs" style="left:780.10px;top:732.54px;width:149.10px;height:1.1px;background:#b9d7d6"></div>
<svg class="abs" style="left:785.6px;top:739.12px" width="9" height="8" viewBox="0 0 9 8"><line x1="1.9" y1="5.9" x2="6.9" y2="2.1" stroke="#555" stroke-width="0.95"/><circle cx="1.9" cy="5.9" r="1.35" fill="#555"/><circle cx="6.9" cy="2.1" r="1.35" fill="#555"/></svg>
<span class="t d" style="left:806.60px;top:737.02px">Asset</span>
<span class="t d" style="left:780.10px;width:137.10px;text-align:right;top:737.02px">Asset</span>
<div class="abs" style="left:780.10px;top:749.90px;width:149.10px;height:1.1px;background:#b9d7d6"></div>
<svg class="abs" style="left:785.6px;top:756.48px" width="9" height="8" viewBox="0 0 9 8"><line x1="1.9" y1="5.9" x2="6.9" y2="2.1" stroke="#555" stroke-width="0.95"/><circle cx="1.9" cy="5.9" r="1.35" fill="#555"/><circle cx="6.9" cy="2.1" r="1.35" fill="#555"/></svg>
<span class="t d" style="left:806.60px;top:754.38px">Procedures</span>
<span class="t d" style="left:780.10px;width:137.10px;text-align:right;top:754.38px">Procedure</span>
<div class="ent" style="left:999.40px;top:635.30px;width:159.40px;height:126.30px"></div>
<div class="abs" style="left:999.40px;top:655.10px;width:159.40px;height:17.10px;background:#e1e1e1"></div>
<div class="abs" style="left:999.40px;top:672.20px;width:159.40px;height:86.80px;background:#fff"></div>
<svg class="abs" style="left:1003.00px;top:640.70px" width="12" height="10" viewBox="0 0 12 10"><rect x="0.9" y="1.2" width="10" height="7.4" fill="none" stroke="#5f6b6b" stroke-width="0.9"/><rect x="0.5" y="0.6" width="10.8" height="1.9" fill="#5f6b6b"/></svg>
<span class="t d" style="left:1018.70px;top:640.80px;color:#4b5a5a;font-size:8.4px">Procedure</span>
<svg class="abs" style="left:1004.30px;top:659.65px" width="10" height="9" viewBox="0 0 10 9"><path d="M1.5 2.4 L5 5.9 L8.5 2.4" stroke="#222" stroke-width="2.3" fill="none"/></svg>
<span class="t d" style="left:1025.90px;top:658.45px">Properties</span>
<div class="abs" style="left:999.40px;top:672.10px;width:159.40px;height:1.1px;background:#d3e7e6"></div>
<span class="t" style="left:1003.4px;top:679.68px;width:12px;text-align:center;font-size:5.6px;line-height:8px;font-weight:bold;color:#333;letter-spacing:-0.2px">abc</span>
<span class="t d" style="left:1025.90px;top:676.18px">instruction</span>
<span class="t d" style="left:999.40px;width:147.40px;text-align:right;top:676.18px">string</span>
<div class="abs" style="left:999.40px;top:689.06px;width:159.40px;height:1.1px;background:#b9d7d6"></div>
<span class="t" style="left:1003.4px;top:697.04px;width:12px;text-align:center;font-size:5.6px;line-height:8px;font-weight:bold;color:#333;letter-spacing:-0.2px">abc</span>
<span class="t d" style="left:1025.90px;top:693.54px">sequenceNumber</span>
<span class="t d" style="left:999.40px;width:147.40px;text-align:right;top:693.54px">string</span>
<div class="abs" style="left:999.40px;top:706.42px;width:159.40px;height:1.1px;background:#b9d7d6"></div>
<svg class="abs" style="left:1004.8px;top:711.10px" width="9" height="9" viewBox="0 0 9 9"><rect x="0.6" y="1.45" width="1.1" height="0.9" fill="#666"/><rect x="2.9" y="1.45" width="5.6" height="0.9" fill="#555"/><rect x="0.6" y="4.05" width="1.1" height="0.9" fill="#666"/><rect x="2.9" y="4.05" width="5.6" height="0.9" fill="#555"/><rect x="0.6" y="6.6499999999999995" width="1.1" height="0.9" fill="#666"/><rect x="2.9" y="6.6499999999999995" width="5.6" height="0.9" fill="#555"/></svg>
<span class="t d" style="left:1025.90px;top:710.90px">kind</span>
<span class="t d" style="left:999.40px;width:147.40px;text-align:right;top:710.90px">ProcedureKind</span>
<div class="abs" style="left:999.40px;top:723.78px;width:159.40px;height:1.1px;background:#b9d7d6"></div>
<svg class="abs" style="left:1004.9px;top:730.36px" width="9" height="8" viewBox="0 0 9 8"><line x1="1.9" y1="5.9" x2="6.9" y2="2.1" stroke="#555" stroke-width="0.95"/><circle cx="1.9" cy="5.9" r="1.35" fill="#555"/><circle cx="6.9" cy="2.1" r="1.35" fill="#555"/></svg>
<span class="t d" style="left:1025.90px;top:728.26px">Assets</span>
<span class="t d" style="left:999.40px;width:147.40px;text-align:right;top:728.26px">Asset</span>
<div class="abs" style="left:999.40px;top:741.14px;width:159.40px;height:1.1px;background:#b9d7d6"></div>
<svg class="abs" style="left:1004.9px;top:747.72px" width="9" height="8" viewBox="0 0 9 8"><line x1="1.9" y1="5.9" x2="6.9" y2="2.1" stroke="#555" stroke-width="0.95"/><circle cx="1.9" cy="5.9" r="1.35" fill="#555"/><circle cx="6.9" cy="2.1" r="1.35" fill="#555"/></svg>
<span class="t d" style="left:1025.90px;top:745.62px">Measurements</span>
<span class="t d" style="left:999.40px;width:147.40px;text-align:right;top:745.62px">Measurement</span>
<svg class="abs" style="left:0;top:0" width="1920" height="1080" viewBox="0 0 1920 1080"><rect x="1162.70" y="275.40" width="10.6" height="8.6" fill="#fff" opacity="0.92"/><text x="1168.00" y="282.20" text-anchor="middle" font-family="Liberation Serif, serif" font-size="7.6" fill="#333">0..*</text><rect x="1219.50" y="229.50" width="10.6" height="8.6" fill="#fff" opacity="0.92"/><text x="1224.80" y="236.30" text-anchor="middle" font-family="Liberation Serif, serif" font-size="7.6" fill="#333">0..*</text><rect x="1388.00" y="174.20" width="11.4" height="8.6" fill="#fff" opacity="0.92"/><text x="1393.70" y="181.00" text-anchor="middle" font-family="Liberation Serif, serif" font-size="7.6" fill="#333">0..1</text><rect x="1539.90" y="274.20" width="10.6" height="8.6" fill="#fff" opacity="0.92"/><text x="1545.20" y="281.00" text-anchor="middle" font-family="Liberation Serif, serif" font-size="7.6" fill="#333">0..*</text><rect x="1166.90" y="352.60" width="10.6" height="8.6" fill="#fff" opacity="0.92"/><text x="1172.20" y="359.40" text-anchor="middle" font-family="Liberation Serif, serif" font-size="7.6" fill="#333">0..*</text><rect x="1227.60" y="349.50" width="11.4" height="8.6" fill="#fff" opacity="0.92"/><text x="1233.30" y="356.30" text-anchor="middle" font-family="Liberation Serif, serif" font-size="7.6" fill="#333">0..1</text><rect x="1168.30" y="428.40" width="10.6" height="8.6" fill="#fff" opacity="0.92"/><text x="1173.60" y="435.20" text-anchor="middle" font-family="Liberation Serif, serif" font-size="7.6" fill="#333">0..*</text><rect x="1213.70" y="459.40" width="10.6" height="8.6" fill="#fff" opacity="0.92"/><text x="1219.00" y="466.20" text-anchor="middle" font-family="Liberation Serif, serif" font-size="7.6" fill="#333">0..*</text><rect x="1380.50" y="467.40" width="11.4" height="8.6" fill="#fff" opacity="0.92"/><text x="1386.20" y="474.20" text-anchor="middle" font-family="Liberation Serif, serif" font-size="7.6" fill="#333">0..1</text><rect x="1457.30" y="413.80" width="10.6" height="8.6" fill="#fff" opacity="0.92"/><text x="1462.60" y="420.60" text-anchor="middle" font-family="Liberation Serif, serif" font-size="7.6" fill="#333">0..*</text><rect x="1539.80" y="414.40" width="10.6" height="8.6" fill="#fff" opacity="0.92"/><text x="1545.10" y="421.20" text-anchor="middle" font-family="Liberation Serif, serif" font-size="7.6" fill="#333">0..*</text><rect x="1539.80" y="513.30" width="10.6" height="8.6" fill="#fff" opacity="0.92"/><text x="1545.10" y="520.10" text-anchor="middle" font-family="Liberation Serif, serif" font-size="7.6" fill="#333">0..*</text><rect x="1075.00" y="581.40" width="10.6" height="8.6" fill="#fff" opacity="0.92"/><text x="1080.30" y="588.20" text-anchor="middle" font-family="Liberation Serif, serif" font-size="7.6" fill="#333">0..*</text><rect x="1076.10" y="622.00" width="10.6" height="8.6" fill="#fff" opacity="0.92"/><text x="1081.40" y="628.80" text-anchor="middle" font-family="Liberation Serif, serif" font-size="7.6" fill="#333">0..*</text><rect x="930.20" y="687.20" width="10.6" height="8.6" fill="#fff" opacity="0.92"/><text x="935.50" y="694.00" text-anchor="middle" font-family="Liberation Serif, serif" font-size="7.6" fill="#333">0..*</text><rect x="984.00" y="687.20" width="10.6" height="8.6" fill="#fff" opacity="0.92"/><text x="989.30" y="694.00" text-anchor="middle" font-family="Liberation Serif, serif" font-size="7.6" fill="#333">0..*</text><rect x="840.90" y="581.40" width="11.4" height="8.6" fill="#fff" opacity="0.92"/><text x="846.60" y="588.20" text-anchor="middle" font-family="Liberation Serif, serif" font-size="7.6" fill="#333">0..1</text><rect x="928.90" y="355.70" width="10.6" height="8.6" fill="#fff" opacity="0.92"/><text x="934.20" y="362.50" text-anchor="middle" font-family="Liberation Serif, serif" font-size="7.6" fill="#333">0..*</text></svg>
<div class="abs" style="left:1414.8px;top:750.8px;width:200px;height:120px;background:#fff"></div>
<div class="abs" style="left:1533px;top:785.8px;width:18.8px;height:41.9px;background:#9ac2c1"></div>
<div class="abs" style="left:1559px;top:784px;width:13.2px;height:8.8px;background:#9ac2c1"></div>
<div class="abs" style="left:1559.8px;top:802.7px;width:11.3px;height:7.3px;background:#9ac2c1"></div>
<div class="abs" style="left:1578px;top:802px;width:24.0px;height:8.8px;background:#9ac2c1"></div>
<div class="abs" style="left:1558px;top:818px;width:15.0px;height:9.7px;background:#9ac2c1"></div>
<div class="abs" style="left:1581.8px;top:824.2px;width:16.2px;height:6.8px;background:#9ac2c1"></div>
<div class="abs" style="left:1514.2px;top:833px;width:14.8px;height:14.0px;background:#9ac2c1"></div>
<div class="abs" style="left:1536px;top:834.2px;width:15.8px;height:12.8px;background:#9ac2c1"></div>
<div class="abs" style="left:1510.8px;top:775.7px;width:84.6px;height:73.6px;border:1.8px solid #4a93e6"></div>
<div class="abs" style="left:1589.8px;top:843.8px;width:10px;height:10px;border-radius:50%;border:1.5px solid #4a93e6;background:#e3ecfa"></div>
</div></div>
<div class="abs" style="left:1183px;top:865.2px;width:207.6px;height:5.6px;border-radius:3px;background:#c5c1c5"></div>
<div class="abs" style="left:1608.3px;top:373.5px;width:5.4px;height:276.5px;border-radius:3px;background:#c5c1c5"></div>
<div class="panel" style="left:1614.6px;top:45px;width:300.6px;height:836px;box-shadow:-2px 0 4px rgba(0,0,0,.22)"><div class="sep"></div></div>
<span class="t" style="left:1619.30px;top:51.80px;font-size:15.4px;line-height:20px;letter-spacing:-0.169px;color:#222;">Entity Details</span>
<svg class="abs" style="left:1892.90px;top:52.90px" width="19.20" height="19.20" viewBox="0 0 19.2 19.2"><circle cx="9.6" cy="9.6" r="9.6" fill="#848484"/><path d="M8 5 L12.6 9.6 L8 14.2" stroke="#fff" stroke-width="1.9" fill="none"/></svg>
<div class="abs" style="left:1623.4px;top:95.3px;width:283.4px;height:35.4px;border:1px solid #b4b4b4;border-radius:4px"></div><div class="abs" style="left:1632px;top:93.3px;width:72.0px;height:4px;background:#fff"></div>
<span class="t" style="left:1637.00px;top:87.00px;font-size:9.8px;line-height:13px;letter-spacing:-0.307px;color:#9e9e9e;">Entity Name</span>
<span class="t" style="left:1637.00px;top:105.30px;font-size:12.24px;line-height:17px;letter-spacing:-0.420px;color:#aaaaaa;">Asset</span>
<div class="abs" style="left:1623.4px;top:147.1px;width:283.4px;height:96.7px;border:1px solid #b4b4b4;border-radius:4px"></div><div class="abs" style="left:1632px;top:145.1px;width:66.8px;height:4px;background:#fff"></div>
<span class="t" style="left:1637.00px;top:138.80px;font-size:9.8px;line-height:13px;letter-spacing:-0.256px;color:#9e9e9e;">Description</span>
<span class="t" style="left:1637.00px;top:159.30px;font-size:13.2px;line-height:17px;letter-spacing:-0.300px;color:#aaaaaa;">Tangible resource of the utility, including</span>
<span class="t" style="left:1637.00px;top:178.30px;font-size:13.13px;line-height:17px;letter-spacing:-0.420px;color:#aaaaaa;">power system equipment, various end</span>
<span class="t" style="left:1637.00px;top:197.30px;font-size:13.02px;line-height:17px;letter-spacing:-0.420px;color:#aaaaaa;">devices, cabinets, buildings, etc. For</span>
<span class="t" style="left:1637.00px;top:216.30px;font-size:13.2px;line-height:17px;letter-spacing:-0.293px;color:#aaaaaa;">electrical network equipment, the role of</span>
<div class="abs" style="left:1876px;top:158.4px;width:17px;height:75.2px;background:#f1f1f1"></div>
<div class="abs" style="left:1878px;top:175px;width:13px;height:17px;background:#c1c1c1"></div>
<div class="abs" style="left:1876px;top:217px;width:17px;height:16.6px;background:#dcdcdc"></div>
<svg class="abs" style="left:1876px;top:158.4px" width="17" height="76" viewBox="0 0 17 76"><path d="M5 10.4 L8.5 6.6 L12 10.4 Z" fill="#505050"/><path d="M5 47 L8.5 50.8 L12 47 Z" fill="#505050"/><path d="M8 73.5 L15 66.5 M11.5 73.5 L15 70" stroke="#555" stroke-width="0.9"/></svg>
<span class="t" style="left:1625.00px;top:261.40px;font-size:11px;line-height:14px;letter-spacing:-0.350px;color:#686868;">Is Abstract</span>
<div class="abs" style="left:1689px;top:264.4px;width:20.4px;height:8.8px;border-radius:5px;background:#e2e2e2"></div>
<div class="abs" style="left:1690px;top:265.7px;width:6.2px;height:6.2px;border-radius:50%;background:#b8b8b8"></div>
<div class="abs" style="left:1623.4px;top:293.3px;width:283.4px;height:35.4px;border:1px solid #b4b4b4;border-radius:4px"></div>
<span class="t" style="left:1637.30px;top:303.20px;font-size:12.50px;line-height:17px;letter-spacing:-0.420px;color:#b4b4b4;">Alias Name</span>
<div class="abs" style="left:1623.4px;top:345.4px;width:249.3px;height:39.2px;border:1px solid #b4b4b4;border-radius:4px"></div><div class="abs" style="left:1632px;top:343.4px;width:93.0px;height:4px;background:#fff"></div>
<span class="t" style="left:1637.30px;top:336.90px;font-size:9.8px;line-height:13px;letter-spacing:-0.373px;color:#9e9e9e;">Source Ontology</span>
<span class="t" style="left:1637.30px;top:357.00px;font-size:12.15px;line-height:17px;letter-spacing:-0.420px;color:#b4b4b4;">N/A</span>
<svg class="abs" style="left:1879.2px;top:353.5px" width="21" height="21" viewBox="0 0 21 21"><circle cx="10.5" cy="10.5" r="9.4" fill="none" stroke="#d8d8d8" stroke-width="1.4"/><rect x="9.8" y="9" width="1.5" height="6.2" fill="#d4d4d4"/><rect x="9.8" y="5.6" width="1.5" height="1.7" fill="#d4d4d4"/></svg>
<div class="abs" style="left:1623.4px;top:401.3px;width:283.4px;height:96.4px;border:1px solid #b4b4b4;border-radius:4px"></div>
<span class="t" style="left:1637.30px;top:411.30px;font-size:12.83px;line-height:17px;letter-spacing:-0.420px;color:#b4b4b4;">Source Profiles</span>
<svg class="abs" style="left:1882px;top:477px" width="12" height="12" viewBox="0 0 12 12"><path d="M2 10.5 L10.5 2 M6 10.5 L10.5 6" stroke="#666" stroke-width="0.9"/></svg>
<div class="abs" style="left:1614.6px;top:506px;width:5.2px;height:39.7px;background:#129ba1"></div>
<span class="t" style="left:1628.30px;top:515.40px;font-size:13.55px;line-height:18px;letter-spacing:-0.420px;color:#2e2e2e;">Labels</span>
<svg class="abs" style="left:1869px;top:513.5px" width="24" height="24" viewBox="0 0 24 24"><path fill="#1a1a1a" d="M3 17.25V21h3.75L17.81 9.94l-3.75-3.75L3 17.25zM20.71 7.04c.39-.39.39-1.02 0-1.41l-2.34-2.34c-.39-.39-1.02-.39-1.41 0l-1.83 1.83 3.75 3.75 1.83-1.83z"/></svg>
<span class="t" style="left:1624.00px;top:555.40px;font-size:13.67px;line-height:18px;letter-spacing:-0.420px;color:#2e2e2e;font-style:italic;">None</span>
<div class="abs" style="left:1614.6px;top:582px;width:5.2px;height:39.7px;background:#129ba1"></div>
<span class="t" style="left:1628.30px;top:591.40px;font-size:13.81px;line-height:18px;letter-spacing:-0.420px;color:#2e2e2e;">Comments</span>
<svg class="abs" style="left:1872px;top:590px" width="24" height="24" viewBox="0 0 24 24"><path fill="#129ba1" d="M20 2H4c-1.1 0-1.99.9-1.99 2L2 22l4-4h14c1.1 0 2-.9 2-2V4c0-1.1-.9-2-2-2z"/><g fill="#fff"><rect x="6" y="6" width="2" height="2"/><rect x="6" y="9" width="2" height="2"/><rect x="6" y="12" width="2" height="2"/><rect x="10" y="6" width="8" height="2"/><rect x="10" y="9" width="8" height="2"/><rect x="10" y="12" width="8" height="2"/></g></svg>
<div class="abs" style="left:77px;top:917px;width:1821px;height:26.5px;background:#fafafa;border-bottom:1px solid #d2d2d2"></div>
<span class="t" style="left:95.00px;top:923.50px;font-size:11.4px;line-height:15px;letter-spacing:-0.116px;color:#3c3c3c;">Type</span>
<span class="t" style="left:246.50px;top:923.50px;font-size:11.4px;line-height:15px;letter-spacing:-0.270px;color:#3c3c3c;">Source</span>
<span class="t" style="left:520.00px;top:923.50px;font-size:11.4px;line-height:15px;letter-spacing:-0.339px;color:#3c3c3c;">Source Role</span>
<span class="t" style="left:725.00px;top:923.50px;font-size:11.4px;line-height:15px;letter-spacing:0.060px;color:#3c3c3c;">Source Multiplicity</span>
<span class="t" style="left:975.60px;top:923.50px;font-size:11.4px;line-height:15px;letter-spacing:-0.114px;color:#3c3c3c;">Target</span>
<span class="t" style="left:1218.00px;top:923.50px;font-size:11.4px;line-height:15px;letter-spacing:-0.209px;color:#3c3c3c;">Target Role</span>
<span class="t" style="left:1468.75px;top:923.50px;font-size:11.4px;line-height:15px;letter-spacing:0.122px;color:#3c3c3c;">Target Multiplicity</span>
<span class="t" style="left:1713.75px;top:923.50px;font-size:11.4px;line-height:15px;letter-spacing:-0.054px;color:#3c3c3c;">Visible</span>
<div class="abs" style="left:77px;top:944.5px;width:1821px;height:126.5px;overflow:hidden"><div class="abs" style="left:-77px;top:-944.5px;width:1920px;height:1080px">
<span class="t" style="left:95.00px;top:943.80px;font-size:11.4px;line-height:15px;letter-spacing:-0.072px;color:#3c3c3c;">Association</span>
<span class="t" style="left:246.50px;top:943.80px;font-size:11.4px;line-height:15px;letter-spacing:-0.402px;color:#3c3c3c;">Asset</span>
<span class="t" style="left:520.00px;top:943.80px;font-size:11.25px;line-height:15px;letter-spacing:-0.420px;color:#3c3c3c;">Assets</span>
<span class="t" style="left:725.00px;top:943.80px;font-size:11.4px;line-height:15px;letter-spacing:-0.336px;color:#3c3c3c;">0...1</span>
<span class="t" style="left:975.60px;top:943.80px;font-size:11.4px;line-height:15px;letter-spacing:-0.124px;color:#3c3c3c;">AssetContainer</span>
<span class="t" style="left:1218.00px;top:943.80px;font-size:11.4px;line-height:15px;letter-spacing:-0.139px;color:#3c3c3c;">AssetContainer</span>
<span class="t" style="left:1468.75px;top:943.80px;font-size:11.02px;line-height:15px;letter-spacing:-0.420px;color:#3c3c3c;">0...*</span>
<div class="abs" style="left:1721px;top:946.20px;width:22px;height:9.6px;border-radius:5px;background:#fff;border:1px solid #8f8f8f"></div>
<div class="abs" style="left:1722.8px;top:947.90px;width:6.2px;height:6.2px;border-radius:50%;background:#b0b0b0"></div>
<svg class="abs" style="left:1869.2px;top:945.90px" width="11" height="13" viewBox="0 0 10 13" preserveAspectRatio="none"><path fill="#767676" d="M1.4 1.2 H3.3 L3.9 0.5 H6.1 L6.7 1.2 H8.6 V2.3 H1.4 Z M1.8 3.3 H8.2 V11.3 a1 1 0 0 1 -1 1 H2.8 a1 1 0 0 1 -1 -1 Z"/></svg>
<span class="t" style="left:95.00px;top:965.75px;font-size:11.4px;line-height:15px;letter-spacing:-0.072px;color:#3c3c3c;">Association</span>
<span class="t" style="left:246.50px;top:965.75px;font-size:11.4px;line-height:15px;letter-spacing:-0.166px;color:#3c3c3c;">WorkTask</span>
<span class="t" style="left:520.00px;top:965.75px;font-size:11.4px;line-height:15px;letter-spacing:-0.309px;color:#3c3c3c;">WorkTasks</span>
<span class="t" style="left:725.00px;top:965.75px;font-size:11.02px;line-height:15px;letter-spacing:-0.420px;color:#3c3c3c;">0...*</span>
<span class="t" style="left:975.60px;top:965.75px;font-size:11.40px;line-height:15px;letter-spacing:-0.420px;color:#3c3c3c;">Asset</span>
<span class="t" style="left:1218.00px;top:965.75px;font-size:11.17px;line-height:15px;letter-spacing:-0.420px;color:#3c3c3c;">Assets</span>
<span class="t" style="left:1468.75px;top:965.75px;font-size:11.02px;line-height:15px;letter-spacing:-0.420px;color:#3c3c3c;">0...*</span>
<div class="abs" style="left:1721px;top:968.15px;width:22px;height:9.6px;border-radius:5px;background:#fff;border:1px solid #8f8f8f"></div>
<div class="abs" style="left:1722.8px;top:969.85px;width:6.2px;height:6.2px;border-radius:50%;background:#b0b0b0"></div>
<svg class="abs" style="left:1869.2px;top:967.85px" width="11" height="13" viewBox="0 0 10 13" preserveAspectRatio="none"><path fill="#767676" d="M1.4 1.2 H3.3 L3.9 0.5 H6.1 L6.7 1.2 H8.6 V2.3 H1.4 Z M1.8 3.3 H8.2 V11.3 a1 1 0 0 1 -1 1 H2.8 a1 1 0 0 1 -1 -1 Z"/></svg>
<span class="t" style="left:95.00px;top:987.70px;font-size:11.4px;line-height:15px;letter-spacing:-0.072px;color:#3c3c3c;">Association</span>
<span class="t" style="left:246.50px;top:987.70px;font-size:11.4px;line-height:15px;letter-spacing:-0.402px;color:#3c3c3c;">Asset</span>
<span class="t" style="left:520.00px;top:987.70px;font-size:11.25px;line-height:15px;letter-spacing:-0.420px;color:#3c3c3c;">Assets</span>
<span class="t" style="left:725.00px;top:987.70px;font-size:11.02px;line-height:15px;letter-spacing:-0.420px;color:#3c3c3c;">0...*</span>
<span class="t" style="left:975.60px;top:987.70px;font-size:11.4px;line-height:15px;letter-spacing:-0.214px;color:#3c3c3c;">ErpRecDelvLineItem</span>
<span class="t" style="left:1218.00px;top:987.70px;font-size:11.4px;line-height:15px;letter-spacing:-0.177px;color:#3c3c3c;">ErpRecDeliveryItems</span>
<span class="t" style="left:1468.75px;top:987.70px;font-size:11.02px;line-height:15px;letter-spacing:-0.420px;color:#3c3c3c;">0...*</span>
<div class="abs" style="left:1721px;top:990.10px;width:22px;height:9.6px;border-radius:5px;background:#fff;border:1px solid #8f8f8f"></div>
<div class="abs" style="left:1722.8px;top:991.80px;width:6.2px;height:6.2px;border-radius:50%;background:#b0b0b0"></div>
<svg class="abs" style="left:1869.2px;top:989.80px" width="11" height="13" viewBox="0 0 10 13" preserveAspectRatio="none"><path fill="#767676" d="M1.4 1.2 H3.3 L3.9 0.5 H6.1 L6.7 1.2 H8.6 V2.3 H1.4 Z M1.8 3.3 H8.2 V11.3 a1 1 0 0 1 -1 1 H2.8 a1 1 0 0 1 -1 -1 Z"/></svg>
<span class="t" style="left:95.00px;top:1009.65px;font-size:11.4px;line-height:15px;letter-spacing:-0.072px;color:#3c3c3c;">Association</span>
<span class="t" style="left:246.50px;top:1009.65px;font-size:11.4px;line-height:15px;letter-spacing:-0.008px;color:#3c3c3c;">Medium</span>
<span class="t" style="left:520.00px;top:1009.65px;font-size:11.4px;line-height:15px;letter-spacing:-0.091px;color:#3c3c3c;">Medium</span>
<span class="t" style="left:725.00px;top:1009.65px;font-size:11.02px;line-height:15px;letter-spacing:-0.420px;color:#3c3c3c;">0...*</span>
<span class="t" style="left:975.60px;top:1009.65px;font-size:11.40px;line-height:15px;letter-spacing:-0.420px;color:#3c3c3c;">Asset</span>
<span class="t" style="left:1218.00px;top:1009.65px;font-size:11.4px;line-height:15px;letter-spacing:-0.402px;color:#3c3c3c;">Asset</span>
<span class="t" style="left:1468.75px;top:1009.65px;font-size:11.02px;line-height:15px;letter-spacing:-0.420px;color:#3c3c3c;">0...*</span>
<div class="abs" style="left:1721px;top:1012.05px;width:22px;height:9.6px;border-radius:5px;background:#0f9ca3"></div>
<div class="abs" style="left:1734.8px;top:1013.75px;width:6.2px;height:6.2px;border-radius:50%;background:#fff"></div>
<svg class="abs" style="left:1869.2px;top:1011.75px" width="11" height="13" viewBox="0 0 10 13" preserveAspectRatio="none"><path fill="#767676" d="M1.4 1.2 H3.3 L3.9 0.5 H6.1 L6.7 1.2 H8.6 V2.3 H1.4 Z M1.8 3.3 H8.2 V11.3 a1 1 0 0 1 -1 1 H2.8 a1 1 0 0 1 -1 -1 Z"/></svg>
<span class="t" style="left:95.00px;top:1031.60px;font-size:11.4px;line-height:15px;letter-spacing:-0.072px;color:#3c3c3c;">Association</span>
<span class="t" style="left:246.50px;top:1031.60px;font-size:11.4px;line-height:15px;letter-spacing:-0.054px;color:#3c3c3c;">Ownership</span>
<span class="t" style="left:520.00px;top:1031.60px;font-size:11.4px;line-height:15px;letter-spacing:-0.119px;color:#3c3c3c;">Ownerships</span>
<span class="t" style="left:725.00px;top:1031.60px;font-size:11.4px;line-height:15px;letter-spacing:-0.336px;color:#3c3c3c;">0...1</span>
<span class="t" style="left:975.60px;top:1031.60px;font-size:11.40px;line-height:15px;letter-spacing:-0.420px;color:#3c3c3c;">Asset</span>
<span class="t" style="left:1218.00px;top:1031.60px;font-size:11.4px;line-height:15px;letter-spacing:-0.402px;color:#3c3c3c;">Asset</span>
<span class="t" style="left:1468.75px;top:1031.60px;font-size:11.02px;line-height:15px;letter-spacing:-0.420px;color:#3c3c3c;">0...*</span>
<div class="abs" style="left:1721px;top:1034.00px;width:22px;height:9.6px;border-radius:5px;background:#0f9ca3"></div>
<div class="abs" style="left:1734.8px;top:1035.70px;width:6.2px;height:6.2px;border-radius:50%;background:#fff"></div>
<svg class="abs" style="left:1869.2px;top:1033.70px" width="11" height="13" viewBox="0 0 10 13" preserveAspectRatio="none"><path fill="#767676" d="M1.4 1.2 H3.3 L3.9 0.5 H6.1 L6.7 1.2 H8.6 V2.3 H1.4 Z M1.8 3.3 H8.2 V11.3 a1 1 0 0 1 -1 1 H2.8 a1 1 0 0 1 -1 -1 Z"/></svg>
<span class="t" style="left:95.00px;top:1053.55px;font-size:11.4px;line-height:15px;letter-spacing:-0.072px;color:#3c3c3c;">Association</span>
<span class="t" style="left:246.50px;top:1053.55px;font-size:11.4px;line-height:15px;letter-spacing:0.113px;color:#3c3c3c;">ReliabilityInfo</span>
<span class="t" style="left:520.00px;top:1053.55px;font-size:11.4px;line-height:15px;letter-spacing:0.047px;color:#3c3c3c;">ReliabilityInfos</span>
<span class="t" style="left:725.00px;top:1053.55px;font-size:11.02px;line-height:15px;letter-spacing:-0.420px;color:#3c3c3c;">0...*</span>
<span class="t" style="left:975.60px;top:1053.55px;font-size:11.40px;line-height:15px;letter-spacing:-0.420px;color:#3c3c3c;">Asset</span>
<span class="t" style="left:1218.00px;top:1053.55px;font-size:11.17px;line-height:15px;letter-spacing:-0.420px;color:#3c3c3c;">Assets</span>
<span class="t" style="left:1468.75px;top:1053.55px;font-size:11.02px;line-height:15px;letter-spacing:-0.420px;color:#3c3c3c;">0...*</span>
<div class="abs" style="left:1721px;top:1055.95px;width:22px;height:9.6px;border-radius:5px;background:#0f9ca3"></div>
<div class="abs" style="left:1734.8px;top:1057.65px;width:6.2px;height:6.2px;border-radius:50%;background:#fff"></div>
<svg class="abs" style="left:1869.2px;top:1055.65px" width="11" height="13" viewBox="0 0 10 13" preserveAspectRatio="none"><path fill="#767676" d="M1.4 1.2 H3.3 L3.9 0.5 H6.1 L6.7 1.2 H8.6 V2.3 H1.4 Z M1.8 3.3 H8.2 V11.3 a1 1 0 0 1 -1 1 H2.8 a1 1 0 0 1 -1 -1 Z"/></svg>
</div></div>
<div class="abs" style="left:1898px;top:917px;width:17px;height:154px;background:#f1f1f1"></div>
<div class="abs" style="left:1900px;top:984.8px;width:13px;height:20px;background:#c1c1c1"></div>
<svg class="abs" style="left:1898px;top:917px" width="17" height="154" viewBox="0 0 17 154"><path d="M5 11 L8.5 7.2 L12 11 Z" fill="#505050"/><path d="M5 142.7 L8.5 146.5 L12 142.7 Z" fill="#505050"/></svg>
</body>
</html>
